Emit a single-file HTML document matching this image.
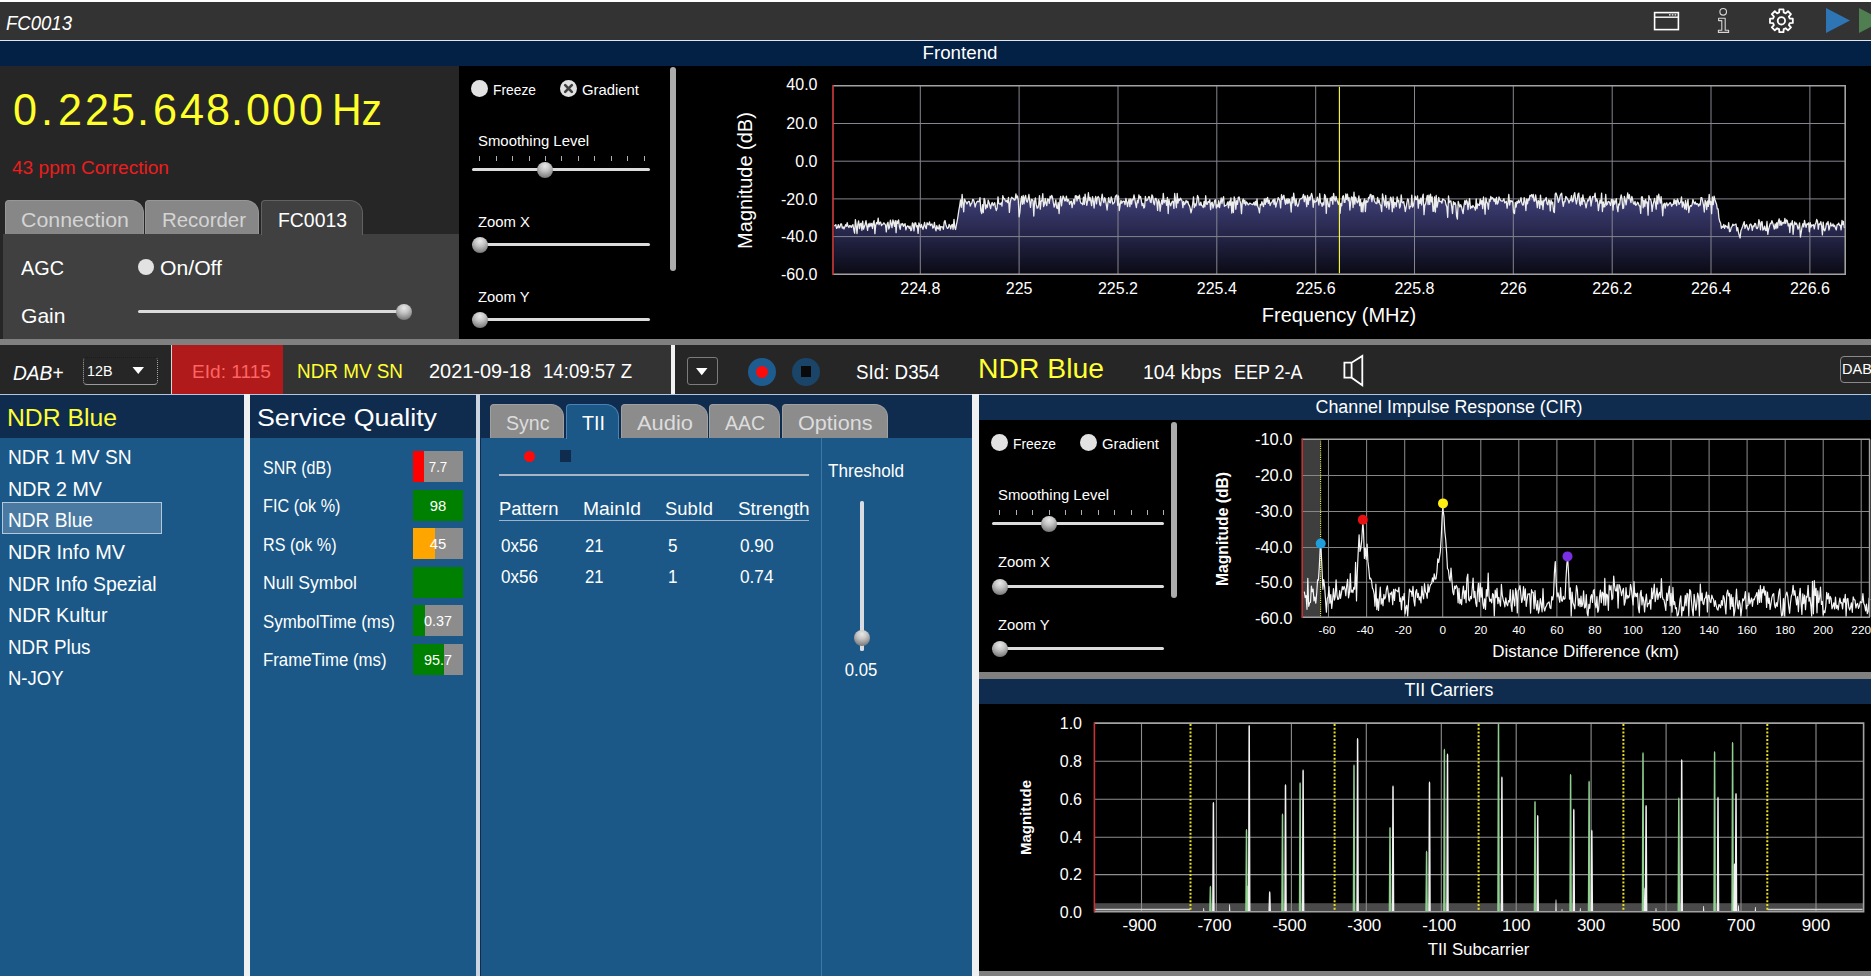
<!DOCTYPE html>
<html lang="en"><head><meta charset="utf-8"><title>FC0013 - DAB+ Receiver</title>
<style>
html,body{margin:0;padding:0;background:#000;}
body{width:1871px;height:976px;position:relative;overflow:hidden;font-family:"Liberation Sans", sans-serif;}
#app div,#app span.t,#app svg{position:absolute;}
#app{position:absolute;left:0;top:0;width:1871px;height:976px;overflow:hidden;}
span.t{white-space:pre;line-height:1;display:block;}
.thumb{border-radius:50%;background:radial-gradient(circle at 50% 25%,#e8e8e8 0%,#c4c4c4 35%,#8c8c8c 70%,#5a5a5a 100%);}
.radio{border-radius:50%;background:#e2e2e2;}
</style></head>
<body><div id="app">
<div style="left:0px;top:0px;width:1871px;height:2px;background:#ffffff;"></div>
<div style="left:0px;top:2px;width:1871px;height:38px;background:#333333;"></div>
<div style="left:0px;top:40px;width:1871px;height:1px;background:#dfe6ee;"></div>
<div style="left:0px;top:41px;width:1871px;height:25px;background:#032045;"></div>
<span class="t" id="t0" style="left:6.0px;top:13.1px;font-size:20px;color:#fff;transform:scaleX(0.9275);transform-origin:left center;font-style:italic;">FC0013</span>
<span class="t" id="t1" style="left:960.0px;top:43.9px;font-size:18px;color:#fff;transform:translateX(-50%) scaleX(1.0410);transform-origin:center center;">Frontend</span>
<svg style="left:1650px;top:6px" width="221" height="32" viewBox="1650 6 221 32" fill="none">
<rect x="1654.6" y="12.6" width="23.8" height="17" stroke="#fff" stroke-width="1.6"/>
<line x1="1654" y1="17.2" x2="1679" y2="17.2" stroke="#fff" stroke-width="1.4"/>
<line x1="1669" y1="14.9" x2="1676.5" y2="14.9" stroke="#fff" stroke-width="1.3" stroke-dasharray="1.6 1.2"/>
<circle cx="1723.2" cy="11.8" r="3.3" stroke="#d6d6d6" stroke-width="1.15"/>
<path d="M1718.6 18.2 H1725.2 V30.2 H1728.6 V32.4 H1718.4 V30.2 H1721.8 V20.6 H1718.6 Z" stroke="#d6d6d6" stroke-width="1.1" stroke-linejoin="round"/>
<path stroke="#fff" stroke-width="1.8" stroke-linejoin="round" d="M1789.69 18.51 L1792.81 18.72 L1792.81 22.88 L1789.69 23.09 L1788.88 25.04 L1790.94 27.40 L1788.00 30.34 L1785.64 28.28 L1783.69 29.09 L1783.48 32.21 L1779.32 32.21 L1779.11 29.09 L1777.16 28.28 L1774.80 30.34 L1771.86 27.40 L1773.92 25.04 L1773.11 23.09 L1769.99 22.88 L1769.99 18.72 L1773.11 18.51 L1773.92 16.56 L1771.86 14.20 L1774.80 11.26 L1777.16 13.32 L1779.11 12.51 L1779.32 9.39 L1783.48 9.39 L1783.69 12.51 L1785.64 13.32 L1788.00 11.26 L1790.94 14.20 L1788.88 16.56 Z"/>
<circle cx="1781.4" cy="20.8" r="3.7" stroke="#fff" stroke-width="1.8"/>
<path d="M1826 8 L1850 20.5 L1826 33 Z" fill="#2e75b6"/>
<path d="M1859 8 L1883 20.5 L1859 33 Z" fill="#4f7f50"/>
</svg>
<div style="left:0px;top:66px;width:459px;height:273px;background:#262626;"></div>
<span class="t" id="t2" style="left:24.6px;top:86.9px;font-size:45px;color:#ffff2a;transform:translateX(-50%) ;transform:translateX(-50%) scaleX(0.96);">0</span>
<span class="t" id="t3" style="left:47.0px;top:86.9px;font-size:45px;color:#ffff2a;transform:translateX(-50%) ;transform:translateX(-50%) scaleX(0.96);">.</span>
<span class="t" id="t4" style="left:70.0px;top:86.9px;font-size:45px;color:#ffff2a;transform:translateX(-50%) ;transform:translateX(-50%) scaleX(0.96);">2</span>
<span class="t" id="t5" style="left:97.2px;top:86.9px;font-size:45px;color:#ffff2a;transform:translateX(-50%) ;transform:translateX(-50%) scaleX(0.96);">2</span>
<span class="t" id="t6" style="left:123.4px;top:86.9px;font-size:45px;color:#ffff2a;transform:translateX(-50%) ;transform:translateX(-50%) scaleX(0.96);">5</span>
<span class="t" id="t7" style="left:142.5px;top:86.9px;font-size:45px;color:#ffff2a;transform:translateX(-50%) ;transform:translateX(-50%) scaleX(0.96);">.</span>
<span class="t" id="t8" style="left:165.0px;top:86.9px;font-size:45px;color:#ffff2a;transform:translateX(-50%) ;transform:translateX(-50%) scaleX(0.96);">6</span>
<span class="t" id="t9" style="left:191.5px;top:86.9px;font-size:45px;color:#ffff2a;transform:translateX(-50%) ;transform:translateX(-50%) scaleX(0.96);">4</span>
<span class="t" id="t10" style="left:218.0px;top:86.9px;font-size:45px;color:#ffff2a;transform:translateX(-50%) ;transform:translateX(-50%) scaleX(0.96);">8</span>
<span class="t" id="t11" style="left:237.0px;top:86.9px;font-size:45px;color:#ffff2a;transform:translateX(-50%) ;transform:translateX(-50%) scaleX(0.96);">.</span>
<span class="t" id="t12" style="left:257.5px;top:86.9px;font-size:45px;color:#ffff2a;transform:translateX(-50%) ;transform:translateX(-50%) scaleX(0.96);">0</span>
<span class="t" id="t13" style="left:284.0px;top:86.9px;font-size:45px;color:#ffff2a;transform:translateX(-50%) ;transform:translateX(-50%) scaleX(0.96);">0</span>
<span class="t" id="t14" style="left:311.0px;top:86.9px;font-size:45px;color:#ffff2a;transform:translateX(-50%) ;transform:translateX(-50%) scaleX(0.96);">0</span>
<span class="t" id="t15" style="left:331.5px;top:86.9px;font-size:45px;color:#ffff2a;transform:scaleX(0.9091);transform-origin:left center;">Hz</span>
<span class="t" id="t16" style="left:12.0px;top:159.5px;font-size:17.5px;color:#ee1c1c;transform:scaleX(1.0905);transform-origin:left center;">43 ppm Correction</span>
<div style="left:3px;top:234px;width:456px;height:105px;background:#404040;"></div>
<div style="left:5px;top:200px;width:139px;height:34px;background:#878787;border-radius:4px 13px 0 0;box-sizing:border-box;border:1px solid #979797;border-bottom:none;"></div>
<div style="left:145.2px;top:200px;width:113.80000000000001px;height:34px;background:#878787;border-radius:4px 13px 0 0;box-sizing:border-box;border:1px solid #979797;border-bottom:none;"></div>
<div style="left:261.3px;top:200px;width:101.69999999999999px;height:35px;background:#404040;border-radius:4px 13px 0 0;box-sizing:border-box;border:1px solid #626262;border-bottom:none;"></div>
<span class="t" id="t17" style="left:21.0px;top:209.2px;font-size:21px;color:#d4d4d4;transform:scaleX(1.0165);transform-origin:left center;">Connection</span>
<span class="t" id="t18" style="left:162.0px;top:209.2px;font-size:21px;color:#d4d4d4;transform:scaleX(0.9725);transform-origin:left center;">Recorder</span>
<span class="t" id="t19" style="left:277.5px;top:209.2px;font-size:21px;color:#fff;transform:scaleX(0.9235);transform-origin:left center;">FC0013</span>
<span class="t" id="t20" style="left:20.5px;top:257.2px;font-size:21px;color:#fff;transform:scaleX(0.9447);transform-origin:left center;">AGC</span>
<div class="radio" style="left:137.7px;top:258.7px;width:16px;height:16px;"></div>
<span class="t" id="t21" style="left:159.5px;top:258.3px;font-size:20.5px;color:#fff;transform:scaleX(1.0331);transform-origin:left center;">On/Off</span>
<span class="t" id="t22" style="left:20.5px;top:304.7px;font-size:21px;color:#fff;transform:scaleX(1.0032);transform-origin:left center;">Gain</span>
<div style="left:138px;top:309.5px;width:260px;height:3px;background:#dcdcdc;border-radius:2px;"></div>
<div class="thumb" style="left:395.7px;top:303.8px;width:16px;height:16px;"></div>
<div style="left:459px;top:66px;width:1412px;height:273px;background:#000;"></div>
<div class="radio" style="left:471.1px;top:80.2px;width:17.0px;height:17.0px;"></div>
<span class="t" id="t23" style="left:492.5px;top:81.7px;font-size:15px;color:#fff;transform:scaleX(0.9210);transform-origin:left center;">Freeze</span>
<div class="radio" style="left:559.8px;top:80.2px;width:17.0px;height:17.0px;"></div>
<svg style="left:559.8px;top:80.2px" width="17.0" height="17.0" viewBox="-8.5 -8.5 17 17"><path d="M-3.3 -3.3 L3.3 3.3 M3.3 -3.3 L-3.3 3.3" stroke="#404040" stroke-width="2.6" stroke-linecap="round"/></svg>
<span class="t" id="t24" style="left:581.5px;top:81.7px;font-size:15px;color:#fff;transform:scaleX(0.9905);transform-origin:left center;">Gradient</span>
<span class="t" id="t25" style="left:477.5px;top:132.7px;font-size:15px;color:#fff;transform:scaleX(0.9933);transform-origin:left center;">Smoothing Level</span>
<div style="left:472px;top:168.0px;width:178px;height:3px;background:#dcdcdc;border-radius:2px;"></div>
<div style="left:479.1px;top:156px;width:1px;height:5px;background:#b0b0b0;"></div>
<div style="left:495.6px;top:156px;width:1px;height:5px;background:#b0b0b0;"></div>
<div style="left:512.0px;top:156px;width:1px;height:5px;background:#b0b0b0;"></div>
<div style="left:528.5px;top:156px;width:1px;height:5px;background:#b0b0b0;"></div>
<div style="left:544.9px;top:156px;width:1px;height:5px;background:#b0b0b0;"></div>
<div style="left:561.4px;top:156px;width:1px;height:5px;background:#b0b0b0;"></div>
<div style="left:577.9px;top:156px;width:1px;height:5px;background:#b0b0b0;"></div>
<div style="left:594.3px;top:156px;width:1px;height:5px;background:#b0b0b0;"></div>
<div style="left:610.8px;top:156px;width:1px;height:5px;background:#b0b0b0;"></div>
<div style="left:627.2px;top:156px;width:1px;height:5px;background:#b0b0b0;"></div>
<div style="left:643.7px;top:156px;width:1px;height:5px;background:#b0b0b0;"></div>
<div class="thumb" style="left:537.4px;top:162.3px;width:16px;height:16px;"></div>
<span class="t" id="t26" style="left:477.5px;top:213.6px;font-size:15px;color:#fff;transform:scaleX(0.9902);transform-origin:left center;">Zoom X</span>
<div style="left:472px;top:242.9px;width:178px;height:3px;background:#dcdcdc;border-radius:2px;"></div>
<div class="thumb" style="left:471.6px;top:237.20000000000002px;width:16px;height:16px;"></div>
<span class="t" id="t27" style="left:477.5px;top:288.5px;font-size:15px;color:#fff;transform:scaleX(0.9856);transform-origin:left center;">Zoom Y</span>
<div style="left:472px;top:317.7px;width:178px;height:3px;background:#dcdcdc;border-radius:2px;"></div>
<div class="thumb" style="left:471.6px;top:312.0px;width:16px;height:16px;"></div>
<div style="left:670px;top:67px;width:6px;height:204px;background:#ababab;border-radius:3px;"></div>
<div style="left:0px;top:339px;width:1871px;height:6px;background:#808080;"></div>
<div style="left:0px;top:345px;width:671px;height:49px;background:#333333;"></div>
<div style="left:0px;top:345px;width:171px;height:49px;background:#262626;"></div>
<div style="left:171px;top:345px;width:112px;height:49px;background:#b01a1a;"></div>
<div style="left:671px;top:345px;width:4px;height:49px;background:#f2f2f2;"></div>
<div style="left:675px;top:345px;width:1196px;height:49px;background:#262626;"></div>
<div style="left:0px;top:393.5px;width:1871px;height:1.5px;background:#b4c6de;"></div>
<span class="t" id="t28" style="left:13.0px;top:363.3px;font-size:20px;color:#fff;transform:scaleX(0.9562);transform-origin:left center;font-style:italic;">DAB+</span>
<div style="left:83px;top:357.3px;width:75px;height:27.6px;box-sizing:border-box;border:1px dotted #a8a8a8;border-top-color:#1c1c1c;border-bottom:1px solid #9a9a9a;border-radius:4px;"></div>
<div style="left:171.2px;top:345px;width:1px;height:49px;background:#d6d6d6;"></div>
<span class="t" id="t29" style="left:86.7px;top:363.0px;font-size:15px;color:#fff;transform:scaleX(0.9549);transform-origin:left center;">12B</span>
<svg style="left:131px;top:365px" width="16" height="12"><path d="M1.5 2 L13 2 L7.25 9 Z" fill="#fff"/></svg>
<span class="t" id="t30" style="left:191.5px;top:362.3px;font-size:19px;color:#ff6464;transform:scaleX(1.0060);transform-origin:left center;">EId: 1115</span>
<span class="t" id="t31" style="left:297.0px;top:362.1px;font-size:19.5px;color:#ffff33;transform:scaleX(0.9687);transform-origin:left center;">NDR MV SN</span>
<span class="t" id="t32" style="left:429.4px;top:361.7px;font-size:19.5px;color:#fff;transform:scaleX(1.0226);transform-origin:left center;">2021-09-18</span>
<span class="t" id="t33" style="left:543.3px;top:361.7px;font-size:19.5px;color:#fff;transform:scaleX(0.9546);transform-origin:left center;">14:09:57 Z</span>
<div style="left:687px;top:357px;width:31px;height:28px;box-sizing:border-box;border:1px solid #7c7c7c;border-radius:3px;"></div>
<svg style="left:694px;top:366px" width="16" height="12"><path d="M2 2 L13.5 2 L7.75 9.3 Z" fill="#fff"/></svg>
<div style="left:747.5px;top:357.5px;width:28.6px;height:28.6px;border-radius:50%;background:#1e5c90;"></div>
<div style="left:755.6px;top:365.6px;width:12.4px;height:12.4px;border-radius:50%;background:#ff0a0a;"></div>
<div style="left:791.5px;top:357.5px;width:28.6px;height:28.6px;border-radius:50%;background:#1a4468;"></div>
<div style="left:801px;top:366.3px;width:9.8px;height:11px;background:#0a0a0a;"></div>
<span class="t" id="t34" style="left:855.9px;top:362.3px;font-size:20px;color:#fff;transform:scaleX(0.9387);transform-origin:left center;">SId: D354</span>
<span class="t" id="t35" style="left:978.0px;top:353.7px;font-size:28.5px;color:#ffff33;transform:scaleX(0.9943);transform-origin:left center;">NDR Blue</span>
<span class="t" id="t36" style="left:1143.0px;top:362.3px;font-size:20px;color:#fff;transform:scaleX(0.9671);transform-origin:left center;">104 kbps</span>
<span class="t" id="t37" style="left:1234.3px;top:362.3px;font-size:20px;color:#fff;transform:scaleX(0.8973);transform-origin:left center;">EEP 2-A</span>
<svg style="left:1340px;top:350px" width="30" height="40" viewBox="1340 350 30 40" fill="none">
<path d="M1344.4 362.7 H1351.6 L1362.3 355.9 V385.2 L1351.6 377.7 H1344.4 Z M1351.6 362.7 V377.7" stroke="#fff" stroke-width="1.8" stroke-linejoin="miter"/></svg>
<div style="left:1839.5px;top:355.5px;width:60px;height:27.5px;box-sizing:border-box;border:1px solid #8a8a8a;border-radius:4px;"></div>
<span class="t" id="t38" style="left:1842.2px;top:361.0px;font-size:15px;color:#fff;transform:scaleX(0.9726);transform-origin:left center;">DAB</span>
<div style="left:0px;top:395px;width:1871px;height:581px;background:#1b5887;"></div>
<div style="left:0px;top:395px;width:972px;height:43px;background:#0f2c4e;"></div>
<div style="left:243.7px;top:394px;width:6.4px;height:582px;background:#eef0f2;"></div>
<div style="left:476.3px;top:394px;width:3.5px;height:582px;background:#ccd4e2;"></div>
<div style="left:479.8px;top:395px;width:1.4px;height:581px;background:#0f2c4e;"></div>
<div style="left:972px;top:394px;width:6.6px;height:582px;background:#eef0f2;"></div>
<span class="t" id="t39" style="left:7.0px;top:406.5px;font-size:23px;color:#ffff33;transform:scaleX(1.0756);transform-origin:left center;">NDR Blue</span>
<div style="left:1.5px;top:502px;width:160.5px;height:31.5px;box-sizing:border-box;background:#4a7aa2;border:1px solid #b4c8dc;"></div>
<span class="t" id="t40" style="left:8.0px;top:448.1px;font-size:19.5px;color:#fff;transform:scaleX(0.9826);transform-origin:left center;">NDR 1 MV SN</span>
<span class="t" id="t41" style="left:8.0px;top:479.7px;font-size:19.5px;color:#fff;transform:scaleX(1.0087);transform-origin:left center;">NDR 2 MV</span>
<span class="t" id="t42" style="left:8.0px;top:511.3px;font-size:19.5px;color:#fff;transform:scaleX(0.9804);transform-origin:left center;">NDR Blue</span>
<span class="t" id="t43" style="left:8.0px;top:542.9px;font-size:19.5px;color:#fff;transform:scaleX(1.0186);transform-origin:left center;">NDR Info MV</span>
<span class="t" id="t44" style="left:8.0px;top:574.5px;font-size:19.5px;color:#fff;transform:scaleX(0.9928);transform-origin:left center;">NDR Info Spezial</span>
<span class="t" id="t45" style="left:8.0px;top:606.1px;font-size:19.5px;color:#fff;transform:scaleX(1.0090);transform-origin:left center;">NDR Kultur</span>
<span class="t" id="t46" style="left:8.0px;top:637.7px;font-size:19.5px;color:#fff;transform:scaleX(0.9637);transform-origin:left center;">NDR Plus</span>
<span class="t" id="t47" style="left:8.0px;top:669.3px;font-size:19.5px;color:#fff;transform:scaleX(0.9487);transform-origin:left center;">N-JOY</span>
<span class="t" id="t48" style="left:257.0px;top:406.6px;font-size:23px;color:#fff;transform:scaleX(1.1638);transform-origin:left center;">Service Quality</span>
<span class="t" id="t49" style="left:263.0px;top:459.7px;font-size:17.5px;color:#fff;transform:scaleX(0.9149);transform-origin:left center;">SNR (dB)</span>
<div style="left:412.5px;top:451.3px;width:50.2px;height:31px;background:#8c8c8c;"></div>
<div style="left:412.5px;top:451.3px;width:11.5px;height:31px;background:#ff0000;"></div>
<span class="t" id="t50" style="left:437.6px;top:460.4px;font-size:14px;color:#fff;transform:translateX(-50%) scaleX(0.9502);transform-origin:center center;">7.7</span>
<span class="t" id="t51" style="left:263.0px;top:498.2px;font-size:17.5px;color:#fff;transform:scaleX(0.9268);transform-origin:left center;">FIC (ok %)</span>
<div style="left:412.5px;top:489.8px;width:50.2px;height:31px;background:#8c8c8c;"></div>
<div style="left:412.5px;top:489.8px;width:50.2px;height:31px;background:#008000;"></div>
<span class="t" id="t52" style="left:437.6px;top:498.9px;font-size:14px;color:#fff;transform:translateX(-50%) scaleX(1.0592);transform-origin:center center;">98</span>
<span class="t" id="t53" style="left:263.0px;top:536.8px;font-size:17.5px;color:#fff;transform:scaleX(0.9218);transform-origin:left center;">RS (ok %)</span>
<div style="left:412.5px;top:528.3px;width:50.2px;height:31px;background:#8c8c8c;"></div>
<div style="left:412.5px;top:528.3px;width:22.5px;height:31px;background:#ffa500;"></div>
<span class="t" id="t54" style="left:437.6px;top:537.4px;font-size:14px;color:#fff;transform:translateX(-50%) scaleX(1.0592);transform-origin:center center;">45</span>
<span class="t" id="t55" style="left:263.0px;top:575.3px;font-size:17.5px;color:#fff;transform:scaleX(1.0067);transform-origin:left center;">Null Symbol</span>
<div style="left:412.5px;top:566.8px;width:50.2px;height:31px;background:#8c8c8c;"></div>
<div style="left:412.5px;top:566.8px;width:50.2px;height:31px;background:#008000;"></div>
<span class="t" id="t56" style="left:263.0px;top:613.9px;font-size:17.5px;color:#fff;transform:scaleX(0.9675);transform-origin:left center;">SymbolTime (ms)</span>
<div style="left:412.5px;top:605.3px;width:50.2px;height:31px;background:#8c8c8c;"></div>
<div style="left:412.5px;top:605.3px;width:12.5px;height:31px;background:#008000;"></div>
<span class="t" id="t57" style="left:437.6px;top:614.4px;font-size:14px;color:#fff;transform:translateX(-50%) scaleX(1.0275);transform-origin:center center;">0.37</span>
<span class="t" id="t58" style="left:263.0px;top:652.4px;font-size:17.5px;color:#fff;transform:scaleX(0.9599);transform-origin:left center;">FrameTime (ms)</span>
<div style="left:412.5px;top:643.8px;width:50.2px;height:31px;background:#8c8c8c;"></div>
<div style="left:412.5px;top:643.8px;width:31.5px;height:31px;background:#008000;"></div>
<span class="t" id="t59" style="left:437.6px;top:652.9px;font-size:14px;color:#fff;transform:translateX(-50%) scaleX(1.0275);transform-origin:center center;">95.7</span>
<div style="left:490.3px;top:404.3px;width:73.99999999999994px;height:33.69999999999999px;background:#8c8c8c;border-radius:4px 13px 0 0;box-sizing:border-box;border:1px solid #a0a0a0;border-bottom:none;"></div>
<div style="left:620.5px;top:404.3px;width:87.29999999999995px;height:33.69999999999999px;background:#8c8c8c;border-radius:4px 13px 0 0;box-sizing:border-box;border:1px solid #a0a0a0;border-bottom:none;"></div>
<div style="left:709.4px;top:404.3px;width:70.80000000000007px;height:33.69999999999999px;background:#8c8c8c;border-radius:4px 13px 0 0;box-sizing:border-box;border:1px solid #a0a0a0;border-bottom:none;"></div>
<div style="left:781.5px;top:404.3px;width:106.39999999999998px;height:33.69999999999999px;background:#8c8c8c;border-radius:4px 13px 0 0;box-sizing:border-box;border:1px solid #a0a0a0;border-bottom:none;"></div>
<div style="left:565.5px;top:404.3px;width:53.5px;height:34.69999999999999px;background:#1b5887;border-radius:4px 13px 0 0;box-sizing:border-box;border:1px solid #4a84b4;border-bottom:none;"></div>
<span class="t" id="t60" style="left:506.0px;top:411.9px;font-size:21px;color:#dcdcdc;transform:scaleX(0.9317);transform-origin:left center;">Sync</span>
<span class="t" id="t61" style="left:581.5px;top:411.9px;font-size:21px;color:#fff;transform:scaleX(0.9388);transform-origin:left center;">TII</span>
<span class="t" id="t62" style="left:636.7px;top:411.9px;font-size:21px;color:#dcdcdc;transform:scaleX(1.0425);transform-origin:left center;">Audio</span>
<span class="t" id="t63" style="left:725.0px;top:411.9px;font-size:21px;color:#dcdcdc;transform:scaleX(0.9262);transform-origin:left center;">AAC</span>
<span class="t" id="t64" style="left:797.5px;top:411.9px;font-size:21px;color:#dcdcdc;transform:scaleX(1.0294);transform-origin:left center;">Options</span>
<div style="left:821px;top:438px;width:1px;height:538px;background:#3f78a6;"></div>
<div style="left:523.8px;top:450.5px;width:11px;height:11px;border-radius:50%;background:#ff0a0a;"></div>
<div style="left:560px;top:450.3px;width:10.6px;height:11.4px;background:#0f2c4e;"></div>
<div style="left:499px;top:474.2px;width:310px;height:1.6px;background:#aab5c4;"></div>
<div style="left:499px;top:519.7px;width:310px;height:1px;background:#9db2cc;"></div>
<span class="t" id="t65" style="left:499.0px;top:499.6px;font-size:18px;color:#fff;transform:scaleX(1.0250);transform-origin:left center;">Pattern</span>
<span class="t" id="t66" style="left:583.0px;top:499.6px;font-size:18px;color:#fff;transform:scaleX(1.0735);transform-origin:left center;">MainId</span>
<span class="t" id="t67" style="left:665.3px;top:499.6px;font-size:18px;color:#fff;transform:scaleX(1.0203);transform-origin:left center;">SubId</span>
<span class="t" id="t68" style="left:738.0px;top:499.6px;font-size:18px;color:#fff;transform:scaleX(1.0507);transform-origin:left center;">Strength</span>
<span class="t" id="t69" style="left:501.0px;top:537.9px;font-size:17.5px;color:#fff;transform:scaleX(0.9749);transform-origin:left center;">0x56</span>
<span class="t" id="t70" style="left:585.0px;top:537.9px;font-size:17.5px;color:#fff;transform:scaleX(0.9502);transform-origin:left center;">21</span>
<span class="t" id="t71" style="left:668.0px;top:537.9px;font-size:17.5px;color:#fff;transform:scaleX(0.9759);transform-origin:left center;">5</span>
<span class="t" id="t72" style="left:740.0px;top:537.9px;font-size:17.5px;color:#fff;transform:scaleX(0.9835);transform-origin:left center;">0.90</span>
<span class="t" id="t73" style="left:501.0px;top:568.7px;font-size:17.5px;color:#fff;transform:scaleX(0.9749);transform-origin:left center;">0x56</span>
<span class="t" id="t74" style="left:585.0px;top:568.7px;font-size:17.5px;color:#fff;transform:scaleX(0.9502);transform-origin:left center;">21</span>
<span class="t" id="t75" style="left:668.0px;top:568.7px;font-size:17.5px;color:#fff;transform:scaleX(0.9759);transform-origin:left center;">1</span>
<span class="t" id="t76" style="left:740.0px;top:568.7px;font-size:17.5px;color:#fff;transform:scaleX(0.9835);transform-origin:left center;">0.74</span>
<span class="t" id="t77" style="left:827.7px;top:461.7px;font-size:18px;color:#fff;transform:scaleX(0.9494);transform-origin:left center;">Threshold</span>
<div style="left:860.4px;top:501px;width:3.3px;height:150px;background:#d8dce2;border-radius:1.6px;"></div>
<div class="thumb" style="left:854px;top:629.7px;width:16px;height:16px;"></div>
<span class="t" id="t78" style="left:861.0px;top:661.5px;font-size:17.5px;color:#fff;transform:translateX(-50%) scaleX(0.9541);transform-origin:center center;">0.05</span>
<div style="left:978.6px;top:395px;width:892.4px;height:25px;background:#0f2c4e;"></div>
<div style="left:978.6px;top:420px;width:892.4px;height:252px;background:#000;"></div>
<div style="left:978.6px;top:672px;width:892.4px;height:7px;background:#808080;"></div>
<div style="left:978.6px;top:679px;width:892.4px;height:25px;background:#0f2c4e;"></div>
<div style="left:978.6px;top:704px;width:892.4px;height:267px;background:#000;"></div>
<div style="left:978.6px;top:971px;width:892.4px;height:5px;background:#808080;"></div>
<span class="t" id="t79" style="left:1449.3px;top:397.8px;font-size:18px;color:#fff;transform:translateX(-50%) scaleX(0.9921);transform-origin:center center;">Channel Impulse Response (CIR)</span>
<span class="t" id="t80" style="left:1449.4px;top:681.0px;font-size:18px;color:#fff;transform:translateX(-50%) scaleX(0.9889);transform-origin:center center;">TII Carriers</span>
<div class="radio" style="left:990.7px;top:433.9px;width:17.0px;height:17.0px;"></div>
<span class="t" id="t81" style="left:1012.6px;top:435.8px;font-size:15px;color:#fff;transform:scaleX(0.9210);transform-origin:left center;">Freeze</span>
<div class="radio" style="left:1079.8px;top:433.9px;width:17.0px;height:17.0px;"></div>
<span class="t" id="t82" style="left:1101.8px;top:435.8px;font-size:15px;color:#fff;transform:scaleX(0.9905);transform-origin:left center;">Gradient</span>
<span class="t" id="t83" style="left:997.5px;top:487.2px;font-size:15px;color:#fff;transform:scaleX(0.9933);transform-origin:left center;">Smoothing Level</span>
<div style="left:991.6px;top:522.0px;width:172.39999999999998px;height:3px;background:#dcdcdc;border-radius:2px;"></div>
<div style="left:999.3px;top:510px;width:1px;height:5.2999999999999545px;background:#b0b0b0;"></div>
<div style="left:1015.7px;top:510px;width:1px;height:5.2999999999999545px;background:#b0b0b0;"></div>
<div style="left:1032.1px;top:510px;width:1px;height:5.2999999999999545px;background:#b0b0b0;"></div>
<div style="left:1048.5px;top:510px;width:1px;height:5.2999999999999545px;background:#b0b0b0;"></div>
<div style="left:1064.9px;top:510px;width:1px;height:5.2999999999999545px;background:#b0b0b0;"></div>
<div style="left:1081.3px;top:510px;width:1px;height:5.2999999999999545px;background:#b0b0b0;"></div>
<div style="left:1097.8px;top:510px;width:1px;height:5.2999999999999545px;background:#b0b0b0;"></div>
<div style="left:1114.2px;top:510px;width:1px;height:5.2999999999999545px;background:#b0b0b0;"></div>
<div style="left:1130.6px;top:510px;width:1px;height:5.2999999999999545px;background:#b0b0b0;"></div>
<div style="left:1147.0px;top:510px;width:1px;height:5.2999999999999545px;background:#b0b0b0;"></div>
<div style="left:1163.4px;top:510px;width:1px;height:5.2999999999999545px;background:#b0b0b0;"></div>
<div class="thumb" style="left:1041px;top:516.3px;width:16px;height:16px;"></div>
<span class="t" id="t84" style="left:997.5px;top:554.0px;font-size:15px;color:#fff;transform:scaleX(0.9902);transform-origin:left center;">Zoom X</span>
<div style="left:991.6px;top:584.5px;width:172.39999999999998px;height:3px;background:#dcdcdc;border-radius:2px;"></div>
<div class="thumb" style="left:991.8px;top:578.8px;width:16px;height:16px;"></div>
<span class="t" id="t85" style="left:997.5px;top:617.1px;font-size:15px;color:#fff;transform:scaleX(0.9856);transform-origin:left center;">Zoom Y</span>
<div style="left:991.6px;top:646.8px;width:172.39999999999998px;height:3px;background:#dcdcdc;border-radius:2px;"></div>
<div class="thumb" style="left:991.8px;top:641.0999999999999px;width:16px;height:16px;"></div>
<div style="left:1171.4px;top:421.5px;width:6px;height:176px;background:#ababab;border-radius:3px;"></div>
<svg style="left:700px;top:66px" width="1171" height="273" viewBox="700 66 1171 273" >
<defs><linearGradient id="sg" gradientUnits="userSpaceOnUse" x1="0" y1="190" x2="0" y2="274"><stop offset="0" stop-color="#44447f"/><stop offset="0.45" stop-color="#2a2a52"/><stop offset="1" stop-color="#0a0a15"/></linearGradient></defs>
<polygon points="834.0,274.3 834.2,226.1 835.0,225.5 835.8,224.6 836.6,228.4 837.5,227.5 838.3,224.6 839.1,227.9 839.9,227.0 840.7,223.8 841.5,223.8 842.3,228.1 843.2,227.0 844.0,229.0 844.8,227.1 845.6,224.7 846.4,226.3 847.2,222.6 848.0,226.2 848.9,227.5 849.7,225.6 850.5,225.9 851.3,227.4 852.1,225.6 852.9,224.6 853.8,229.5 854.6,233.1 855.4,219.6 856.2,225.5 857.0,233.5 857.8,224.5 858.6,220.8 859.5,228.6 860.3,223.9 861.1,223.2 861.9,230.3 862.7,221.1 863.5,229.2 864.3,227.0 865.2,224.2 866.0,220.7 866.8,226.1 867.6,230.4 868.4,223.8 869.2,226.8 870.0,223.1 870.9,226.2 871.7,223.3 872.5,228.5 873.3,222.9 874.1,220.6 874.9,233.7 875.7,225.3 876.6,222.5 877.4,223.8 878.2,218.2 879.0,224.7 879.8,222.7 880.6,222.1 881.5,225.7 882.3,224.3 883.1,224.2 883.9,222.8 884.7,224.0 885.5,224.9 886.3,231.9 887.2,223.9 888.0,222.3 888.8,229.0 889.6,227.0 890.4,220.2 891.2,223.6 892.0,227.6 892.9,219.9 893.7,222.5 894.5,226.3 895.3,220.6 896.1,232.6 896.9,221.0 897.7,223.3 898.6,219.9 899.4,226.5 900.2,229.3 901.0,223.8 901.8,224.7 902.6,223.5 903.4,226.4 904.3,224.6 905.1,223.8 905.9,229.9 906.7,227.1 907.5,226.0 908.3,226.2 909.2,228.3 910.0,226.2 910.8,230.7 911.6,229.8 912.4,223.0 913.2,224.0 914.0,230.8 914.9,222.9 915.7,222.8 916.5,226.9 917.3,225.6 918.1,233.4 918.9,223.0 919.7,225.3 920.6,227.4 921.4,224.5 922.2,227.4 923.0,229.3 923.8,225.8 924.6,222.5 925.4,226.9 926.3,228.6 927.1,222.7 927.9,224.5 928.7,224.6 929.5,221.9 930.3,225.7 931.1,224.6 932.0,224.0 932.8,228.1 933.6,227.4 934.4,222.5 935.2,228.0 936.0,230.8 936.8,225.6 937.7,228.7 938.5,229.0 939.3,224.8 940.1,230.3 940.9,226.5 941.7,226.8 942.6,226.8 943.4,229.3 944.2,222.1 945.0,220.5 945.8,224.4 946.6,226.8 947.4,228.4 948.3,227.8 949.1,224.5 949.9,225.6 950.7,228.9 951.5,225.3 952.3,224.5 953.1,229.3 954.0,219.4 954.8,227.4 955.6,229.5 956.4,224.8 957.2,221.0 958.0,216.2 958.8,210.7 959.7,205.5 960.5,200.0 961.3,207.3 962.1,194.4 962.9,203.4 963.7,211.8 964.5,199.1 965.4,200.9 966.2,202.4 967.0,204.0 967.8,202.2 968.6,201.3 969.4,201.7 970.3,206.0 971.1,203.8 971.9,202.8 972.7,199.3 973.5,199.8 974.3,202.2 975.1,207.0 976.0,203.7 976.8,202.0 977.6,201.1 978.4,201.6 979.2,201.5 980.0,197.6 980.8,210.5 981.7,213.6 982.5,204.7 983.3,212.5 984.1,198.4 984.9,200.0 985.7,208.9 986.5,204.8 987.4,207.3 988.2,200.1 989.0,202.5 989.8,205.4 990.6,208.6 991.4,204.2 992.2,202.5 993.1,205.6 993.9,204.0 994.7,202.7 995.5,207.7 996.3,210.6 997.1,208.0 998.0,196.8 998.8,203.6 999.6,203.8 1000.4,204.4 1001.2,202.8 1002.0,206.0 1002.8,195.7 1003.7,198.8 1004.5,198.7 1005.3,200.6 1006.1,201.7 1006.9,200.4 1007.7,202.7 1008.5,197.3 1009.4,212.4 1010.2,202.8 1011.0,198.8 1011.8,197.3 1012.6,198.4 1013.4,198.4 1014.2,200.0 1015.1,199.8 1015.9,193.9 1016.7,197.9 1017.5,196.0 1018.3,200.2 1019.1,216.8 1019.9,212.2 1020.8,201.5 1021.6,196.5 1022.4,204.3 1023.2,195.5 1024.0,203.8 1024.8,197.4 1025.6,195.4 1026.5,201.0 1027.3,202.1 1028.1,199.0 1028.9,194.5 1029.7,201.1 1030.5,207.4 1031.4,199.5 1032.2,199.6 1033.0,200.9 1033.8,216.0 1034.6,201.4 1035.4,197.9 1036.2,204.4 1037.1,208.0 1037.9,207.8 1038.7,204.4 1039.5,195.6 1040.3,209.1 1041.1,201.0 1041.9,201.1 1042.8,193.6 1043.6,206.6 1044.4,204.6 1045.2,198.4 1046.0,203.4 1046.8,205.7 1047.6,199.0 1048.5,199.4 1049.3,203.3 1050.1,196.2 1050.9,198.2 1051.7,195.3 1052.5,197.3 1053.3,202.4 1054.2,207.2 1055.0,204.3 1055.8,199.9 1056.6,207.5 1057.4,208.6 1058.2,202.5 1059.1,213.5 1059.9,200.3 1060.7,196.5 1061.5,205.8 1062.3,200.0 1063.1,196.0 1063.9,197.5 1064.8,200.9 1065.6,200.4 1066.4,196.1 1067.2,201.5 1068.0,199.4 1068.8,200.3 1069.6,204.3 1070.5,201.7 1071.3,201.1 1072.1,207.7 1072.9,203.5 1073.7,199.5 1074.5,204.0 1075.3,195.9 1076.2,195.6 1077.0,201.0 1077.8,196.3 1078.6,198.4 1079.4,195.2 1080.2,201.1 1081.0,203.3 1081.9,203.4 1082.7,204.7 1083.5,197.1 1084.3,204.4 1085.1,194.1 1085.9,199.5 1086.8,205.4 1087.6,200.8 1088.4,192.7 1089.2,200.6 1090.0,197.3 1090.8,200.8 1091.6,205.6 1092.5,196.6 1093.3,200.7 1094.1,208.0 1094.9,200.3 1095.7,196.3 1096.5,203.8 1097.3,197.9 1098.2,196.5 1099.0,197.8 1099.8,204.6 1100.6,205.7 1101.4,199.4 1102.2,194.2 1103.0,200.2 1103.9,202.7 1104.7,197.6 1105.5,199.9 1106.3,204.3 1107.1,210.0 1107.9,202.9 1108.7,197.6 1109.6,202.7 1110.4,202.8 1111.2,196.9 1112.0,199.3 1112.8,204.0 1113.6,203.0 1114.4,202.7 1115.3,196.8 1116.1,195.6 1116.9,194.9 1117.7,205.3 1118.5,196.0 1119.3,210.5 1120.2,204.7 1121.0,200.3 1121.8,203.3 1122.6,201.8 1123.4,201.1 1124.2,201.3 1125.0,204.6 1125.9,198.4 1126.7,202.0 1127.5,206.6 1128.3,201.9 1129.1,198.9 1129.9,206.7 1130.7,198.8 1131.6,204.1 1132.4,199.2 1133.2,199.8 1134.0,194.8 1134.8,199.2 1135.6,203.9 1136.4,207.7 1137.3,200.4 1138.1,202.9 1138.9,194.8 1139.7,198.0 1140.5,196.5 1141.3,200.3 1142.1,205.6 1143.0,203.4 1143.8,208.0 1144.6,207.0 1145.4,196.3 1146.2,200.5 1147.0,200.3 1147.9,199.1 1148.7,196.6 1149.5,196.8 1150.3,202.0 1151.1,202.6 1151.9,194.8 1152.7,196.4 1153.6,202.7 1154.4,204.9 1155.2,198.7 1156.0,198.4 1156.8,201.6 1157.6,210.4 1158.4,199.6 1159.3,201.5 1160.1,211.1 1160.9,204.7 1161.7,200.2 1162.5,204.2 1163.3,193.4 1164.1,202.8 1165.0,200.4 1165.8,200.3 1166.6,205.3 1167.4,197.3 1168.2,213.5 1169.0,199.5 1169.8,203.6 1170.7,205.8 1171.5,203.3 1172.3,201.1 1173.1,201.3 1173.9,208.4 1174.7,193.5 1175.5,200.2 1176.4,207.6 1177.2,193.5 1178.0,203.2 1178.8,199.1 1179.6,200.5 1180.4,198.2 1181.3,199.7 1182.1,201.0 1182.9,207.7 1183.7,201.4 1184.5,204.7 1185.3,203.5 1186.1,200.4 1187.0,202.6 1187.8,201.2 1188.6,204.5 1189.4,205.5 1190.2,208.4 1191.0,212.9 1191.8,209.5 1192.7,203.8 1193.5,196.8 1194.3,207.7 1195.1,204.0 1195.9,205.9 1196.7,201.8 1197.5,195.5 1198.4,197.5 1199.2,204.9 1200.0,205.2 1200.8,202.1 1201.6,205.5 1202.4,205.8 1203.2,207.6 1204.1,201.3 1204.9,206.8 1205.7,195.7 1206.5,204.2 1207.3,204.3 1208.1,201.4 1209.0,202.2 1209.8,199.7 1210.6,209.7 1211.4,202.9 1212.2,202.2 1213.0,208.0 1213.8,205.0 1214.7,200.3 1215.5,199.8 1216.3,208.0 1217.1,204.8 1217.9,206.8 1218.7,200.6 1219.5,207.7 1220.4,202.5 1221.2,198.0 1222.0,203.5 1222.8,198.9 1223.6,196.7 1224.4,206.3 1225.2,205.8 1226.1,205.3 1226.9,204.3 1227.7,202.0 1228.5,207.9 1229.3,201.2 1230.1,205.1 1230.9,197.8 1231.8,213.0 1232.6,201.9 1233.4,212.5 1234.2,196.9 1235.0,199.6 1235.8,209.3 1236.7,200.7 1237.5,204.4 1238.3,197.4 1239.1,197.0 1239.9,200.7 1240.7,203.4 1241.5,213.7 1242.4,200.8 1243.2,198.9 1244.0,203.7 1244.8,200.2 1245.6,205.2 1246.4,201.8 1247.2,202.8 1248.1,204.8 1248.9,204.4 1249.7,203.2 1250.5,203.4 1251.3,204.0 1252.1,204.5 1252.9,204.5 1253.8,202.5 1254.6,205.0 1255.4,201.5 1256.2,205.5 1257.0,198.9 1257.8,206.6 1258.6,208.4 1259.5,212.9 1260.3,204.4 1261.1,205.1 1261.9,201.7 1262.7,204.5 1263.5,206.6 1264.3,198.8 1265.2,204.3 1266.0,198.5 1266.8,202.0 1267.6,197.4 1268.4,203.3 1269.2,200.1 1270.1,205.5 1270.9,203.0 1271.7,202.7 1272.5,200.9 1273.3,199.5 1274.1,204.5 1274.9,199.0 1275.8,207.1 1276.6,203.4 1277.4,200.9 1278.2,197.7 1279.0,198.9 1279.8,200.7 1280.6,207.9 1281.5,194.7 1282.3,199.3 1283.1,196.9 1283.9,195.3 1284.7,200.5 1285.5,204.4 1286.3,199.1 1287.2,203.6 1288.0,198.7 1288.8,203.2 1289.6,199.3 1290.4,203.1 1291.2,212.0 1292.0,197.2 1292.9,202.8 1293.7,193.1 1294.5,199.8 1295.3,205.5 1296.1,198.9 1296.9,204.5 1297.8,206.5 1298.6,204.5 1299.4,200.3 1300.2,198.9 1301.0,198.7 1301.8,198.3 1302.6,197.4 1303.5,194.3 1304.3,201.6 1305.1,195.8 1305.9,198.9 1306.7,206.6 1307.5,195.3 1308.3,204.4 1309.2,197.0 1310.0,200.2 1310.8,196.2 1311.6,193.4 1312.4,196.6 1313.2,207.3 1314.0,200.0 1314.9,202.3 1315.7,201.5 1316.5,201.3 1317.3,197.1 1318.1,200.2 1318.9,205.0 1319.7,193.6 1320.6,202.9 1321.4,203.2 1322.2,206.3 1323.0,202.7 1323.8,205.0 1324.6,194.5 1325.5,196.2 1326.3,213.4 1327.1,198.5 1327.9,201.8 1328.7,206.7 1329.5,206.9 1330.3,198.0 1331.2,200.6 1332.0,196.7 1332.8,204.1 1333.6,193.3 1334.4,198.6 1335.2,201.1 1336.0,196.4 1336.9,199.7 1337.7,202.2 1338.5,204.5 1339.3,199.5 1340.1,213.3 1340.9,203.4 1341.7,205.8 1342.6,196.7 1343.4,195.7 1344.2,202.3 1345.0,202.3 1345.8,193.9 1346.6,199.3 1347.4,194.1 1348.3,200.7 1349.1,197.7 1349.9,210.0 1350.7,202.1 1351.5,196.8 1352.3,197.4 1353.1,207.5 1354.0,192.2 1354.8,204.1 1355.6,197.1 1356.4,200.1 1357.2,202.8 1358.0,201.6 1358.9,195.8 1359.7,205.6 1360.5,199.4 1361.3,211.7 1362.1,202.6 1362.9,211.9 1363.7,201.8 1364.6,198.9 1365.4,211.5 1366.2,200.4 1367.0,202.2 1367.8,201.8 1368.6,197.4 1369.4,198.0 1370.3,194.5 1371.1,194.7 1371.9,201.7 1372.7,195.6 1373.5,195.9 1374.3,200.5 1375.1,202.3 1376.0,203.4 1376.8,203.7 1377.6,197.4 1378.4,202.6 1379.2,200.0 1380.0,204.4 1380.8,205.4 1381.7,211.5 1382.5,193.8 1383.3,198.0 1384.1,201.9 1384.9,205.8 1385.7,195.4 1386.6,207.5 1387.4,202.2 1388.2,201.3 1389.0,209.2 1389.8,202.5 1390.6,197.1 1391.4,198.7 1392.3,211.6 1393.1,196.9 1393.9,207.8 1394.7,202.5 1395.5,202.8 1396.3,206.5 1397.1,196.8 1398.0,201.8 1398.8,200.3 1399.6,208.0 1400.4,206.0 1401.2,194.9 1402.0,202.0 1402.8,202.9 1403.7,201.6 1404.5,205.8 1405.3,211.5 1406.1,207.6 1406.9,202.7 1407.7,198.9 1408.5,200.1 1409.4,208.8 1410.2,206.6 1411.0,206.1 1411.8,195.1 1412.6,207.1 1413.4,205.4 1414.3,200.5 1415.1,196.2 1415.9,199.6 1416.7,199.1 1417.5,195.9 1418.3,208.2 1419.1,199.7 1420.0,203.3 1420.8,198.2 1421.6,204.9 1422.4,197.4 1423.2,194.1 1424.0,214.7 1424.8,205.4 1425.7,203.6 1426.5,199.2 1427.3,195.4 1428.1,204.5 1428.9,195.1 1429.7,204.4 1430.5,194.2 1431.4,201.8 1432.2,196.9 1433.0,211.3 1433.8,211.2 1434.6,196.9 1435.4,212.0 1436.2,195.5 1437.1,207.2 1437.9,203.0 1438.7,197.5 1439.5,201.3 1440.3,201.7 1441.1,201.1 1441.9,203.2 1442.8,198.9 1443.6,199.6 1444.4,200.2 1445.2,200.5 1446.0,204.8 1446.8,206.8 1447.7,217.4 1448.5,196.0 1449.3,202.5 1450.1,201.1 1450.9,200.9 1451.7,206.5 1452.5,213.5 1453.4,201.7 1454.2,204.4 1455.0,202.6 1455.8,204.8 1456.6,216.0 1457.4,219.0 1458.2,201.5 1459.1,204.4 1459.9,207.0 1460.7,204.7 1461.5,206.7 1462.3,210.5 1463.1,213.6 1463.9,206.3 1464.8,200.7 1465.6,204.3 1466.4,200.1 1467.2,201.8 1468.0,209.5 1468.8,203.1 1469.6,198.6 1470.5,208.5 1471.3,206.3 1472.1,207.8 1472.9,205.5 1473.7,206.7 1474.5,207.4 1475.4,210.2 1476.2,198.9 1477.0,208.6 1477.8,203.9 1478.6,204.7 1479.4,205.4 1480.2,198.9 1481.1,204.1 1481.9,200.3 1482.7,208.7 1483.5,197.0 1484.3,203.8 1485.1,214.2 1485.9,197.9 1486.8,202.1 1487.6,203.5 1488.4,209.2 1489.2,199.7 1490.0,201.6 1490.8,196.5 1491.6,199.0 1492.5,197.7 1493.3,198.7 1494.1,201.4 1494.9,198.9 1495.7,204.0 1496.5,197.4 1497.3,204.1 1498.2,202.4 1499.0,197.0 1499.8,198.9 1500.6,200.6 1501.4,200.8 1502.2,201.3 1503.1,200.6 1503.9,198.7 1504.7,202.8 1505.5,202.5 1506.3,201.2 1507.1,208.2 1507.9,203.2 1508.8,194.4 1509.6,205.0 1510.4,200.7 1511.2,201.5 1512.0,200.7 1512.8,202.6 1513.6,212.8 1514.5,213.5 1515.3,202.5 1516.1,207.1 1516.9,201.5 1517.7,203.2 1518.5,200.1 1519.3,202.7 1520.2,201.0 1521.0,197.7 1521.8,202.8 1522.6,205.1 1523.4,204.9 1524.2,197.6 1525.0,200.8 1525.9,210.5 1526.7,198.9 1527.5,203.8 1528.3,199.0 1529.1,200.2 1529.9,195.5 1530.7,196.1 1531.6,194.6 1532.4,197.3 1533.2,194.4 1534.0,201.0 1534.8,201.0 1535.6,194.9 1536.5,200.8 1537.3,207.6 1538.1,200.6 1538.9,201.0 1539.7,208.4 1540.5,195.1 1541.3,204.8 1542.2,200.8 1543.0,209.5 1543.8,200.1 1544.6,200.9 1545.4,199.4 1546.2,197.5 1547.0,203.6 1547.9,204.8 1548.7,199.9 1549.5,200.8 1550.3,210.9 1551.1,199.8 1551.9,203.9 1552.7,202.1 1553.6,211.5 1554.4,212.5 1555.2,194.1 1556.0,193.0 1556.8,195.4 1557.6,197.8 1558.4,202.3 1559.3,200.1 1560.1,196.0 1560.9,194.1 1561.7,193.2 1562.5,201.6 1563.3,206.4 1564.2,201.2 1565.0,201.7 1565.8,196.3 1566.6,197.4 1567.4,199.0 1568.2,200.1 1569.0,203.0 1569.9,200.1 1570.7,200.3 1571.5,195.7 1572.3,201.8 1573.1,201.1 1573.9,195.1 1574.7,192.7 1575.6,199.7 1576.4,204.0 1577.2,199.9 1578.0,194.2 1578.8,193.1 1579.6,203.2 1580.4,205.8 1581.3,197.9 1582.1,204.4 1582.9,194.8 1583.7,201.1 1584.5,200.2 1585.3,204.1 1586.1,207.8 1587.0,202.6 1587.8,199.8 1588.6,200.9 1589.4,197.3 1590.2,196.2 1591.0,206.0 1591.8,201.2 1592.7,196.6 1593.5,196.9 1594.3,196.9 1595.1,193.1 1595.9,201.5 1596.7,198.9 1597.6,201.3 1598.4,210.6 1599.2,205.2 1600.0,200.1 1600.8,203.2 1601.6,193.1 1602.4,211.5 1603.3,201.8 1604.1,206.8 1604.9,206.6 1605.7,194.4 1606.5,205.0 1607.3,204.2 1608.1,201.3 1609.0,201.6 1609.8,203.2 1610.6,205.5 1611.4,199.6 1612.2,199.3 1613.0,210.2 1613.8,200.0 1614.7,204.1 1615.5,201.4 1616.3,198.6 1617.1,207.3 1617.9,211.7 1618.7,204.0 1619.5,204.9 1620.4,198.8 1621.2,194.8 1622.0,198.7 1622.8,208.5 1623.6,208.1 1624.4,196.3 1625.3,200.5 1626.1,204.8 1626.9,198.9 1627.7,193.0 1628.5,198.5 1629.3,194.7 1630.1,199.0 1631.0,202.5 1631.8,196.5 1632.6,199.3 1633.4,203.4 1634.2,204.3 1635.0,201.3 1635.8,205.3 1636.7,204.6 1637.5,202.2 1638.3,203.0 1639.1,205.6 1639.9,206.1 1640.7,213.4 1641.5,196.8 1642.4,197.0 1643.2,207.8 1644.0,200.4 1644.8,206.5 1645.6,199.4 1646.4,202.8 1647.2,202.0 1648.1,215.2 1648.9,195.7 1649.7,199.1 1650.5,199.1 1651.3,201.9 1652.1,211.4 1653.0,204.8 1653.8,201.7 1654.6,198.5 1655.4,203.1 1656.2,209.1 1657.0,195.7 1657.8,203.9 1658.7,194.2 1659.5,199.2 1660.3,203.2 1661.1,196.6 1661.9,204.3 1662.7,215.8 1663.5,204.7 1664.4,203.3 1665.2,208.2 1666.0,203.3 1666.8,202.9 1667.6,205.9 1668.4,204.6 1669.2,203.8 1670.1,202.5 1670.9,203.6 1671.7,206.2 1672.5,204.4 1673.3,204.4 1674.1,199.4 1674.9,203.9 1675.8,200.4 1676.6,205.6 1677.4,199.0 1678.2,200.8 1679.0,204.4 1679.8,202.9 1680.6,202.3 1681.5,196.8 1682.3,207.1 1683.1,201.9 1683.9,205.2 1684.7,208.9 1685.5,200.4 1686.4,209.6 1687.2,203.9 1688.0,199.3 1688.8,212.5 1689.6,207.3 1690.4,205.5 1691.2,206.2 1692.1,204.6 1692.9,199.5 1693.7,201.9 1694.5,203.9 1695.3,201.9 1696.1,204.4 1696.9,203.7 1697.8,203.9 1698.6,206.2 1699.4,204.0 1700.2,205.0 1701.0,197.6 1701.8,197.7 1702.6,200.8 1703.5,204.9 1704.3,212.0 1705.1,200.2 1705.9,202.0 1706.7,209.5 1707.5,200.9 1708.3,206.4 1709.2,194.4 1710.0,204.3 1710.8,201.4 1711.6,213.6 1712.4,197.0 1713.2,204.6 1714.1,196.1 1714.9,199.4 1715.7,202.1 1716.5,204.0 1717.3,208.9 1718.1,209.0 1718.9,217.8 1719.8,221.6 1720.6,223.0 1721.4,228.3 1722.2,226.4 1723.0,227.2 1723.8,224.3 1724.6,228.4 1725.5,225.4 1726.3,226.7 1727.1,226.7 1727.9,228.2 1728.7,222.7 1729.5,231.6 1730.3,231.4 1731.2,227.5 1732.0,226.6 1732.8,224.2 1733.6,225.4 1734.4,224.8 1735.2,224.5 1736.0,224.0 1736.9,230.9 1737.7,227.6 1738.5,232.5 1739.3,235.6 1740.1,238.0 1740.9,230.7 1741.8,228.6 1742.6,226.5 1743.4,224.0 1744.2,221.7 1745.0,228.4 1745.8,225.7 1746.6,224.8 1747.5,227.6 1748.3,230.1 1749.1,228.0 1749.9,224.5 1750.7,224.0 1751.5,225.4 1752.3,230.4 1753.2,225.8 1754.0,226.6 1754.8,223.3 1755.6,223.8 1756.4,228.2 1757.2,228.6 1758.0,226.9 1758.9,219.7 1759.7,222.9 1760.5,229.8 1761.3,222.1 1762.1,221.7 1762.9,230.1 1763.7,229.3 1764.6,226.2 1765.4,230.2 1766.2,230.6 1767.0,221.5 1767.8,234.3 1768.6,229.5 1769.4,226.4 1770.3,223.4 1771.1,223.7 1771.9,220.7 1772.7,222.9 1773.5,225.8 1774.3,229.2 1775.2,223.8 1776.0,228.7 1776.8,222.7 1777.6,227.9 1778.4,221.4 1779.2,218.8 1780.0,225.3 1780.9,220.9 1781.7,225.1 1782.5,222.9 1783.3,222.4 1784.1,223.5 1784.9,218.4 1785.7,223.4 1786.6,219.9 1787.4,221.0 1788.2,225.8 1789.0,223.7 1789.8,232.5 1790.6,223.2 1791.4,224.8 1792.3,220.7 1793.1,234.3 1793.9,225.9 1794.7,222.0 1795.5,224.4 1796.3,223.1 1797.1,225.0 1798.0,229.2 1798.8,226.9 1799.6,222.8 1800.4,237.0 1801.2,232.3 1802.0,227.2 1802.9,223.7 1803.7,226.9 1804.5,220.3 1805.3,224.3 1806.1,227.4 1806.9,223.8 1807.7,224.3 1808.6,222.9 1809.4,231.8 1810.2,222.7 1811.0,227.1 1811.8,224.9 1812.6,225.6 1813.4,224.7 1814.3,228.8 1815.1,224.4 1815.9,223.2 1816.7,219.5 1817.5,221.2 1818.3,229.2 1819.1,223.9 1820.0,224.3 1820.8,221.7 1821.6,225.8 1822.4,234.9 1823.2,222.1 1824.0,229.8 1824.8,230.8 1825.7,227.9 1826.5,223.1 1827.3,224.2 1828.1,221.5 1828.9,230.0 1829.7,227.3 1830.6,222.9 1831.4,225.9 1832.2,225.9 1833.0,223.9 1833.8,226.6 1834.6,225.3 1835.4,227.9 1836.3,229.9 1837.1,224.6 1837.9,224.6 1838.7,223.1 1839.5,225.4 1840.3,225.2 1841.1,229.8 1842.0,220.5 1842.8,224.5 1843.6,221.5 1844.4,228.2 1844.4,274.3" fill="url(#sg)"/>
<path d="M833.0 123.5H1845.2 M833.0 161.2H1845.2 M833.0 198.9H1845.2 M833.0 236.6H1845.2 M920.3 85.8V274.3 M1019.1 85.8V274.3 M1118.0 85.8V274.3 M1216.8 85.8V274.3 M1315.7 85.8V274.3 M1414.5 85.8V274.3 M1513.3 85.8V274.3 M1612.2 85.8V274.3 M1711.0 85.8V274.3 M1809.9 85.8V274.3" stroke="#858590" stroke-width="1" fill="none"/>
<polyline points="834.2,226.1 835.0,225.5 835.8,224.6 836.6,228.4 837.5,227.5 838.3,224.6 839.1,227.9 839.9,227.0 840.7,223.8 841.5,223.8 842.3,228.1 843.2,227.0 844.0,229.0 844.8,227.1 845.6,224.7 846.4,226.3 847.2,222.6 848.0,226.2 848.9,227.5 849.7,225.6 850.5,225.9 851.3,227.4 852.1,225.6 852.9,224.6 853.8,229.5 854.6,233.1 855.4,219.6 856.2,225.5 857.0,233.5 857.8,224.5 858.6,220.8 859.5,228.6 860.3,223.9 861.1,223.2 861.9,230.3 862.7,221.1 863.5,229.2 864.3,227.0 865.2,224.2 866.0,220.7 866.8,226.1 867.6,230.4 868.4,223.8 869.2,226.8 870.0,223.1 870.9,226.2 871.7,223.3 872.5,228.5 873.3,222.9 874.1,220.6 874.9,233.7 875.7,225.3 876.6,222.5 877.4,223.8 878.2,218.2 879.0,224.7 879.8,222.7 880.6,222.1 881.5,225.7 882.3,224.3 883.1,224.2 883.9,222.8 884.7,224.0 885.5,224.9 886.3,231.9 887.2,223.9 888.0,222.3 888.8,229.0 889.6,227.0 890.4,220.2 891.2,223.6 892.0,227.6 892.9,219.9 893.7,222.5 894.5,226.3 895.3,220.6 896.1,232.6 896.9,221.0 897.7,223.3 898.6,219.9 899.4,226.5 900.2,229.3 901.0,223.8 901.8,224.7 902.6,223.5 903.4,226.4 904.3,224.6 905.1,223.8 905.9,229.9 906.7,227.1 907.5,226.0 908.3,226.2 909.2,228.3 910.0,226.2 910.8,230.7 911.6,229.8 912.4,223.0 913.2,224.0 914.0,230.8 914.9,222.9 915.7,222.8 916.5,226.9 917.3,225.6 918.1,233.4 918.9,223.0 919.7,225.3 920.6,227.4 921.4,224.5 922.2,227.4 923.0,229.3 923.8,225.8 924.6,222.5 925.4,226.9 926.3,228.6 927.1,222.7 927.9,224.5 928.7,224.6 929.5,221.9 930.3,225.7 931.1,224.6 932.0,224.0 932.8,228.1 933.6,227.4 934.4,222.5 935.2,228.0 936.0,230.8 936.8,225.6 937.7,228.7 938.5,229.0 939.3,224.8 940.1,230.3 940.9,226.5 941.7,226.8 942.6,226.8 943.4,229.3 944.2,222.1 945.0,220.5 945.8,224.4 946.6,226.8 947.4,228.4 948.3,227.8 949.1,224.5 949.9,225.6 950.7,228.9 951.5,225.3 952.3,224.5 953.1,229.3 954.0,219.4 954.8,227.4 955.6,229.5 956.4,224.8 957.2,221.0 958.0,216.2 958.8,210.7 959.7,205.5 960.5,200.0 961.3,207.3 962.1,194.4 962.9,203.4 963.7,211.8 964.5,199.1 965.4,200.9 966.2,202.4 967.0,204.0 967.8,202.2 968.6,201.3 969.4,201.7 970.3,206.0 971.1,203.8 971.9,202.8 972.7,199.3 973.5,199.8 974.3,202.2 975.1,207.0 976.0,203.7 976.8,202.0 977.6,201.1 978.4,201.6 979.2,201.5 980.0,197.6 980.8,210.5 981.7,213.6 982.5,204.7 983.3,212.5 984.1,198.4 984.9,200.0 985.7,208.9 986.5,204.8 987.4,207.3 988.2,200.1 989.0,202.5 989.8,205.4 990.6,208.6 991.4,204.2 992.2,202.5 993.1,205.6 993.9,204.0 994.7,202.7 995.5,207.7 996.3,210.6 997.1,208.0 998.0,196.8 998.8,203.6 999.6,203.8 1000.4,204.4 1001.2,202.8 1002.0,206.0 1002.8,195.7 1003.7,198.8 1004.5,198.7 1005.3,200.6 1006.1,201.7 1006.9,200.4 1007.7,202.7 1008.5,197.3 1009.4,212.4 1010.2,202.8 1011.0,198.8 1011.8,197.3 1012.6,198.4 1013.4,198.4 1014.2,200.0 1015.1,199.8 1015.9,193.9 1016.7,197.9 1017.5,196.0 1018.3,200.2 1019.1,216.8 1019.9,212.2 1020.8,201.5 1021.6,196.5 1022.4,204.3 1023.2,195.5 1024.0,203.8 1024.8,197.4 1025.6,195.4 1026.5,201.0 1027.3,202.1 1028.1,199.0 1028.9,194.5 1029.7,201.1 1030.5,207.4 1031.4,199.5 1032.2,199.6 1033.0,200.9 1033.8,216.0 1034.6,201.4 1035.4,197.9 1036.2,204.4 1037.1,208.0 1037.9,207.8 1038.7,204.4 1039.5,195.6 1040.3,209.1 1041.1,201.0 1041.9,201.1 1042.8,193.6 1043.6,206.6 1044.4,204.6 1045.2,198.4 1046.0,203.4 1046.8,205.7 1047.6,199.0 1048.5,199.4 1049.3,203.3 1050.1,196.2 1050.9,198.2 1051.7,195.3 1052.5,197.3 1053.3,202.4 1054.2,207.2 1055.0,204.3 1055.8,199.9 1056.6,207.5 1057.4,208.6 1058.2,202.5 1059.1,213.5 1059.9,200.3 1060.7,196.5 1061.5,205.8 1062.3,200.0 1063.1,196.0 1063.9,197.5 1064.8,200.9 1065.6,200.4 1066.4,196.1 1067.2,201.5 1068.0,199.4 1068.8,200.3 1069.6,204.3 1070.5,201.7 1071.3,201.1 1072.1,207.7 1072.9,203.5 1073.7,199.5 1074.5,204.0 1075.3,195.9 1076.2,195.6 1077.0,201.0 1077.8,196.3 1078.6,198.4 1079.4,195.2 1080.2,201.1 1081.0,203.3 1081.9,203.4 1082.7,204.7 1083.5,197.1 1084.3,204.4 1085.1,194.1 1085.9,199.5 1086.8,205.4 1087.6,200.8 1088.4,192.7 1089.2,200.6 1090.0,197.3 1090.8,200.8 1091.6,205.6 1092.5,196.6 1093.3,200.7 1094.1,208.0 1094.9,200.3 1095.7,196.3 1096.5,203.8 1097.3,197.9 1098.2,196.5 1099.0,197.8 1099.8,204.6 1100.6,205.7 1101.4,199.4 1102.2,194.2 1103.0,200.2 1103.9,202.7 1104.7,197.6 1105.5,199.9 1106.3,204.3 1107.1,210.0 1107.9,202.9 1108.7,197.6 1109.6,202.7 1110.4,202.8 1111.2,196.9 1112.0,199.3 1112.8,204.0 1113.6,203.0 1114.4,202.7 1115.3,196.8 1116.1,195.6 1116.9,194.9 1117.7,205.3 1118.5,196.0 1119.3,210.5 1120.2,204.7 1121.0,200.3 1121.8,203.3 1122.6,201.8 1123.4,201.1 1124.2,201.3 1125.0,204.6 1125.9,198.4 1126.7,202.0 1127.5,206.6 1128.3,201.9 1129.1,198.9 1129.9,206.7 1130.7,198.8 1131.6,204.1 1132.4,199.2 1133.2,199.8 1134.0,194.8 1134.8,199.2 1135.6,203.9 1136.4,207.7 1137.3,200.4 1138.1,202.9 1138.9,194.8 1139.7,198.0 1140.5,196.5 1141.3,200.3 1142.1,205.6 1143.0,203.4 1143.8,208.0 1144.6,207.0 1145.4,196.3 1146.2,200.5 1147.0,200.3 1147.9,199.1 1148.7,196.6 1149.5,196.8 1150.3,202.0 1151.1,202.6 1151.9,194.8 1152.7,196.4 1153.6,202.7 1154.4,204.9 1155.2,198.7 1156.0,198.4 1156.8,201.6 1157.6,210.4 1158.4,199.6 1159.3,201.5 1160.1,211.1 1160.9,204.7 1161.7,200.2 1162.5,204.2 1163.3,193.4 1164.1,202.8 1165.0,200.4 1165.8,200.3 1166.6,205.3 1167.4,197.3 1168.2,213.5 1169.0,199.5 1169.8,203.6 1170.7,205.8 1171.5,203.3 1172.3,201.1 1173.1,201.3 1173.9,208.4 1174.7,193.5 1175.5,200.2 1176.4,207.6 1177.2,193.5 1178.0,203.2 1178.8,199.1 1179.6,200.5 1180.4,198.2 1181.3,199.7 1182.1,201.0 1182.9,207.7 1183.7,201.4 1184.5,204.7 1185.3,203.5 1186.1,200.4 1187.0,202.6 1187.8,201.2 1188.6,204.5 1189.4,205.5 1190.2,208.4 1191.0,212.9 1191.8,209.5 1192.7,203.8 1193.5,196.8 1194.3,207.7 1195.1,204.0 1195.9,205.9 1196.7,201.8 1197.5,195.5 1198.4,197.5 1199.2,204.9 1200.0,205.2 1200.8,202.1 1201.6,205.5 1202.4,205.8 1203.2,207.6 1204.1,201.3 1204.9,206.8 1205.7,195.7 1206.5,204.2 1207.3,204.3 1208.1,201.4 1209.0,202.2 1209.8,199.7 1210.6,209.7 1211.4,202.9 1212.2,202.2 1213.0,208.0 1213.8,205.0 1214.7,200.3 1215.5,199.8 1216.3,208.0 1217.1,204.8 1217.9,206.8 1218.7,200.6 1219.5,207.7 1220.4,202.5 1221.2,198.0 1222.0,203.5 1222.8,198.9 1223.6,196.7 1224.4,206.3 1225.2,205.8 1226.1,205.3 1226.9,204.3 1227.7,202.0 1228.5,207.9 1229.3,201.2 1230.1,205.1 1230.9,197.8 1231.8,213.0 1232.6,201.9 1233.4,212.5 1234.2,196.9 1235.0,199.6 1235.8,209.3 1236.7,200.7 1237.5,204.4 1238.3,197.4 1239.1,197.0 1239.9,200.7 1240.7,203.4 1241.5,213.7 1242.4,200.8 1243.2,198.9 1244.0,203.7 1244.8,200.2 1245.6,205.2 1246.4,201.8 1247.2,202.8 1248.1,204.8 1248.9,204.4 1249.7,203.2 1250.5,203.4 1251.3,204.0 1252.1,204.5 1252.9,204.5 1253.8,202.5 1254.6,205.0 1255.4,201.5 1256.2,205.5 1257.0,198.9 1257.8,206.6 1258.6,208.4 1259.5,212.9 1260.3,204.4 1261.1,205.1 1261.9,201.7 1262.7,204.5 1263.5,206.6 1264.3,198.8 1265.2,204.3 1266.0,198.5 1266.8,202.0 1267.6,197.4 1268.4,203.3 1269.2,200.1 1270.1,205.5 1270.9,203.0 1271.7,202.7 1272.5,200.9 1273.3,199.5 1274.1,204.5 1274.9,199.0 1275.8,207.1 1276.6,203.4 1277.4,200.9 1278.2,197.7 1279.0,198.9 1279.8,200.7 1280.6,207.9 1281.5,194.7 1282.3,199.3 1283.1,196.9 1283.9,195.3 1284.7,200.5 1285.5,204.4 1286.3,199.1 1287.2,203.6 1288.0,198.7 1288.8,203.2 1289.6,199.3 1290.4,203.1 1291.2,212.0 1292.0,197.2 1292.9,202.8 1293.7,193.1 1294.5,199.8 1295.3,205.5 1296.1,198.9 1296.9,204.5 1297.8,206.5 1298.6,204.5 1299.4,200.3 1300.2,198.9 1301.0,198.7 1301.8,198.3 1302.6,197.4 1303.5,194.3 1304.3,201.6 1305.1,195.8 1305.9,198.9 1306.7,206.6 1307.5,195.3 1308.3,204.4 1309.2,197.0 1310.0,200.2 1310.8,196.2 1311.6,193.4 1312.4,196.6 1313.2,207.3 1314.0,200.0 1314.9,202.3 1315.7,201.5 1316.5,201.3 1317.3,197.1 1318.1,200.2 1318.9,205.0 1319.7,193.6 1320.6,202.9 1321.4,203.2 1322.2,206.3 1323.0,202.7 1323.8,205.0 1324.6,194.5 1325.5,196.2 1326.3,213.4 1327.1,198.5 1327.9,201.8 1328.7,206.7 1329.5,206.9 1330.3,198.0 1331.2,200.6 1332.0,196.7 1332.8,204.1 1333.6,193.3 1334.4,198.6 1335.2,201.1 1336.0,196.4 1336.9,199.7 1337.7,202.2 1338.5,204.5 1339.3,199.5 1340.1,213.3 1340.9,203.4 1341.7,205.8 1342.6,196.7 1343.4,195.7 1344.2,202.3 1345.0,202.3 1345.8,193.9 1346.6,199.3 1347.4,194.1 1348.3,200.7 1349.1,197.7 1349.9,210.0 1350.7,202.1 1351.5,196.8 1352.3,197.4 1353.1,207.5 1354.0,192.2 1354.8,204.1 1355.6,197.1 1356.4,200.1 1357.2,202.8 1358.0,201.6 1358.9,195.8 1359.7,205.6 1360.5,199.4 1361.3,211.7 1362.1,202.6 1362.9,211.9 1363.7,201.8 1364.6,198.9 1365.4,211.5 1366.2,200.4 1367.0,202.2 1367.8,201.8 1368.6,197.4 1369.4,198.0 1370.3,194.5 1371.1,194.7 1371.9,201.7 1372.7,195.6 1373.5,195.9 1374.3,200.5 1375.1,202.3 1376.0,203.4 1376.8,203.7 1377.6,197.4 1378.4,202.6 1379.2,200.0 1380.0,204.4 1380.8,205.4 1381.7,211.5 1382.5,193.8 1383.3,198.0 1384.1,201.9 1384.9,205.8 1385.7,195.4 1386.6,207.5 1387.4,202.2 1388.2,201.3 1389.0,209.2 1389.8,202.5 1390.6,197.1 1391.4,198.7 1392.3,211.6 1393.1,196.9 1393.9,207.8 1394.7,202.5 1395.5,202.8 1396.3,206.5 1397.1,196.8 1398.0,201.8 1398.8,200.3 1399.6,208.0 1400.4,206.0 1401.2,194.9 1402.0,202.0 1402.8,202.9 1403.7,201.6 1404.5,205.8 1405.3,211.5 1406.1,207.6 1406.9,202.7 1407.7,198.9 1408.5,200.1 1409.4,208.8 1410.2,206.6 1411.0,206.1 1411.8,195.1 1412.6,207.1 1413.4,205.4 1414.3,200.5 1415.1,196.2 1415.9,199.6 1416.7,199.1 1417.5,195.9 1418.3,208.2 1419.1,199.7 1420.0,203.3 1420.8,198.2 1421.6,204.9 1422.4,197.4 1423.2,194.1 1424.0,214.7 1424.8,205.4 1425.7,203.6 1426.5,199.2 1427.3,195.4 1428.1,204.5 1428.9,195.1 1429.7,204.4 1430.5,194.2 1431.4,201.8 1432.2,196.9 1433.0,211.3 1433.8,211.2 1434.6,196.9 1435.4,212.0 1436.2,195.5 1437.1,207.2 1437.9,203.0 1438.7,197.5 1439.5,201.3 1440.3,201.7 1441.1,201.1 1441.9,203.2 1442.8,198.9 1443.6,199.6 1444.4,200.2 1445.2,200.5 1446.0,204.8 1446.8,206.8 1447.7,217.4 1448.5,196.0 1449.3,202.5 1450.1,201.1 1450.9,200.9 1451.7,206.5 1452.5,213.5 1453.4,201.7 1454.2,204.4 1455.0,202.6 1455.8,204.8 1456.6,216.0 1457.4,219.0 1458.2,201.5 1459.1,204.4 1459.9,207.0 1460.7,204.7 1461.5,206.7 1462.3,210.5 1463.1,213.6 1463.9,206.3 1464.8,200.7 1465.6,204.3 1466.4,200.1 1467.2,201.8 1468.0,209.5 1468.8,203.1 1469.6,198.6 1470.5,208.5 1471.3,206.3 1472.1,207.8 1472.9,205.5 1473.7,206.7 1474.5,207.4 1475.4,210.2 1476.2,198.9 1477.0,208.6 1477.8,203.9 1478.6,204.7 1479.4,205.4 1480.2,198.9 1481.1,204.1 1481.9,200.3 1482.7,208.7 1483.5,197.0 1484.3,203.8 1485.1,214.2 1485.9,197.9 1486.8,202.1 1487.6,203.5 1488.4,209.2 1489.2,199.7 1490.0,201.6 1490.8,196.5 1491.6,199.0 1492.5,197.7 1493.3,198.7 1494.1,201.4 1494.9,198.9 1495.7,204.0 1496.5,197.4 1497.3,204.1 1498.2,202.4 1499.0,197.0 1499.8,198.9 1500.6,200.6 1501.4,200.8 1502.2,201.3 1503.1,200.6 1503.9,198.7 1504.7,202.8 1505.5,202.5 1506.3,201.2 1507.1,208.2 1507.9,203.2 1508.8,194.4 1509.6,205.0 1510.4,200.7 1511.2,201.5 1512.0,200.7 1512.8,202.6 1513.6,212.8 1514.5,213.5 1515.3,202.5 1516.1,207.1 1516.9,201.5 1517.7,203.2 1518.5,200.1 1519.3,202.7 1520.2,201.0 1521.0,197.7 1521.8,202.8 1522.6,205.1 1523.4,204.9 1524.2,197.6 1525.0,200.8 1525.9,210.5 1526.7,198.9 1527.5,203.8 1528.3,199.0 1529.1,200.2 1529.9,195.5 1530.7,196.1 1531.6,194.6 1532.4,197.3 1533.2,194.4 1534.0,201.0 1534.8,201.0 1535.6,194.9 1536.5,200.8 1537.3,207.6 1538.1,200.6 1538.9,201.0 1539.7,208.4 1540.5,195.1 1541.3,204.8 1542.2,200.8 1543.0,209.5 1543.8,200.1 1544.6,200.9 1545.4,199.4 1546.2,197.5 1547.0,203.6 1547.9,204.8 1548.7,199.9 1549.5,200.8 1550.3,210.9 1551.1,199.8 1551.9,203.9 1552.7,202.1 1553.6,211.5 1554.4,212.5 1555.2,194.1 1556.0,193.0 1556.8,195.4 1557.6,197.8 1558.4,202.3 1559.3,200.1 1560.1,196.0 1560.9,194.1 1561.7,193.2 1562.5,201.6 1563.3,206.4 1564.2,201.2 1565.0,201.7 1565.8,196.3 1566.6,197.4 1567.4,199.0 1568.2,200.1 1569.0,203.0 1569.9,200.1 1570.7,200.3 1571.5,195.7 1572.3,201.8 1573.1,201.1 1573.9,195.1 1574.7,192.7 1575.6,199.7 1576.4,204.0 1577.2,199.9 1578.0,194.2 1578.8,193.1 1579.6,203.2 1580.4,205.8 1581.3,197.9 1582.1,204.4 1582.9,194.8 1583.7,201.1 1584.5,200.2 1585.3,204.1 1586.1,207.8 1587.0,202.6 1587.8,199.8 1588.6,200.9 1589.4,197.3 1590.2,196.2 1591.0,206.0 1591.8,201.2 1592.7,196.6 1593.5,196.9 1594.3,196.9 1595.1,193.1 1595.9,201.5 1596.7,198.9 1597.6,201.3 1598.4,210.6 1599.2,205.2 1600.0,200.1 1600.8,203.2 1601.6,193.1 1602.4,211.5 1603.3,201.8 1604.1,206.8 1604.9,206.6 1605.7,194.4 1606.5,205.0 1607.3,204.2 1608.1,201.3 1609.0,201.6 1609.8,203.2 1610.6,205.5 1611.4,199.6 1612.2,199.3 1613.0,210.2 1613.8,200.0 1614.7,204.1 1615.5,201.4 1616.3,198.6 1617.1,207.3 1617.9,211.7 1618.7,204.0 1619.5,204.9 1620.4,198.8 1621.2,194.8 1622.0,198.7 1622.8,208.5 1623.6,208.1 1624.4,196.3 1625.3,200.5 1626.1,204.8 1626.9,198.9 1627.7,193.0 1628.5,198.5 1629.3,194.7 1630.1,199.0 1631.0,202.5 1631.8,196.5 1632.6,199.3 1633.4,203.4 1634.2,204.3 1635.0,201.3 1635.8,205.3 1636.7,204.6 1637.5,202.2 1638.3,203.0 1639.1,205.6 1639.9,206.1 1640.7,213.4 1641.5,196.8 1642.4,197.0 1643.2,207.8 1644.0,200.4 1644.8,206.5 1645.6,199.4 1646.4,202.8 1647.2,202.0 1648.1,215.2 1648.9,195.7 1649.7,199.1 1650.5,199.1 1651.3,201.9 1652.1,211.4 1653.0,204.8 1653.8,201.7 1654.6,198.5 1655.4,203.1 1656.2,209.1 1657.0,195.7 1657.8,203.9 1658.7,194.2 1659.5,199.2 1660.3,203.2 1661.1,196.6 1661.9,204.3 1662.7,215.8 1663.5,204.7 1664.4,203.3 1665.2,208.2 1666.0,203.3 1666.8,202.9 1667.6,205.9 1668.4,204.6 1669.2,203.8 1670.1,202.5 1670.9,203.6 1671.7,206.2 1672.5,204.4 1673.3,204.4 1674.1,199.4 1674.9,203.9 1675.8,200.4 1676.6,205.6 1677.4,199.0 1678.2,200.8 1679.0,204.4 1679.8,202.9 1680.6,202.3 1681.5,196.8 1682.3,207.1 1683.1,201.9 1683.9,205.2 1684.7,208.9 1685.5,200.4 1686.4,209.6 1687.2,203.9 1688.0,199.3 1688.8,212.5 1689.6,207.3 1690.4,205.5 1691.2,206.2 1692.1,204.6 1692.9,199.5 1693.7,201.9 1694.5,203.9 1695.3,201.9 1696.1,204.4 1696.9,203.7 1697.8,203.9 1698.6,206.2 1699.4,204.0 1700.2,205.0 1701.0,197.6 1701.8,197.7 1702.6,200.8 1703.5,204.9 1704.3,212.0 1705.1,200.2 1705.9,202.0 1706.7,209.5 1707.5,200.9 1708.3,206.4 1709.2,194.4 1710.0,204.3 1710.8,201.4 1711.6,213.6 1712.4,197.0 1713.2,204.6 1714.1,196.1 1714.9,199.4 1715.7,202.1 1716.5,204.0 1717.3,208.9 1718.1,209.0 1718.9,217.8 1719.8,221.6 1720.6,223.0 1721.4,228.3 1722.2,226.4 1723.0,227.2 1723.8,224.3 1724.6,228.4 1725.5,225.4 1726.3,226.7 1727.1,226.7 1727.9,228.2 1728.7,222.7 1729.5,231.6 1730.3,231.4 1731.2,227.5 1732.0,226.6 1732.8,224.2 1733.6,225.4 1734.4,224.8 1735.2,224.5 1736.0,224.0 1736.9,230.9 1737.7,227.6 1738.5,232.5 1739.3,235.6 1740.1,238.0 1740.9,230.7 1741.8,228.6 1742.6,226.5 1743.4,224.0 1744.2,221.7 1745.0,228.4 1745.8,225.7 1746.6,224.8 1747.5,227.6 1748.3,230.1 1749.1,228.0 1749.9,224.5 1750.7,224.0 1751.5,225.4 1752.3,230.4 1753.2,225.8 1754.0,226.6 1754.8,223.3 1755.6,223.8 1756.4,228.2 1757.2,228.6 1758.0,226.9 1758.9,219.7 1759.7,222.9 1760.5,229.8 1761.3,222.1 1762.1,221.7 1762.9,230.1 1763.7,229.3 1764.6,226.2 1765.4,230.2 1766.2,230.6 1767.0,221.5 1767.8,234.3 1768.6,229.5 1769.4,226.4 1770.3,223.4 1771.1,223.7 1771.9,220.7 1772.7,222.9 1773.5,225.8 1774.3,229.2 1775.2,223.8 1776.0,228.7 1776.8,222.7 1777.6,227.9 1778.4,221.4 1779.2,218.8 1780.0,225.3 1780.9,220.9 1781.7,225.1 1782.5,222.9 1783.3,222.4 1784.1,223.5 1784.9,218.4 1785.7,223.4 1786.6,219.9 1787.4,221.0 1788.2,225.8 1789.0,223.7 1789.8,232.5 1790.6,223.2 1791.4,224.8 1792.3,220.7 1793.1,234.3 1793.9,225.9 1794.7,222.0 1795.5,224.4 1796.3,223.1 1797.1,225.0 1798.0,229.2 1798.8,226.9 1799.6,222.8 1800.4,237.0 1801.2,232.3 1802.0,227.2 1802.9,223.7 1803.7,226.9 1804.5,220.3 1805.3,224.3 1806.1,227.4 1806.9,223.8 1807.7,224.3 1808.6,222.9 1809.4,231.8 1810.2,222.7 1811.0,227.1 1811.8,224.9 1812.6,225.6 1813.4,224.7 1814.3,228.8 1815.1,224.4 1815.9,223.2 1816.7,219.5 1817.5,221.2 1818.3,229.2 1819.1,223.9 1820.0,224.3 1820.8,221.7 1821.6,225.8 1822.4,234.9 1823.2,222.1 1824.0,229.8 1824.8,230.8 1825.7,227.9 1826.5,223.1 1827.3,224.2 1828.1,221.5 1828.9,230.0 1829.7,227.3 1830.6,222.9 1831.4,225.9 1832.2,225.9 1833.0,223.9 1833.8,226.6 1834.6,225.3 1835.4,227.9 1836.3,229.9 1837.1,224.6 1837.9,224.6 1838.7,223.1 1839.5,225.4 1840.3,225.2 1841.1,229.8 1842.0,220.5 1842.8,224.5 1843.6,221.5 1844.4,228.2" fill="none" stroke="#ececec" stroke-width="1.3" stroke-linejoin="round"/>
<path d="M833.0 85.8H1845.2V274.3H833.0" stroke="#a2a2a2" stroke-width="1.6" fill="none"/>
<path d="M833.0 85.0V275.1" stroke="#d23c3c" stroke-width="1.6"/>
<path d="M1339.4 86.8V273.3" stroke="#ffff3c" stroke-width="1.1"/>
<text x="817.5" y="90.3" text-anchor="end" style="font-family:&quot;Liberation Sans&quot;,sans-serif;fill:#fff;font-size:16px">40.0</text>
<text x="817.5" y="129.2" text-anchor="end" style="font-family:&quot;Liberation Sans&quot;,sans-serif;fill:#fff;font-size:16px">20.0</text>
<text x="817.5" y="166.9" text-anchor="end" style="font-family:&quot;Liberation Sans&quot;,sans-serif;fill:#fff;font-size:16px">0.0</text>
<text x="817.5" y="204.6" text-anchor="end" style="font-family:&quot;Liberation Sans&quot;,sans-serif;fill:#fff;font-size:16px">-20.0</text>
<text x="817.5" y="242.3" text-anchor="end" style="font-family:&quot;Liberation Sans&quot;,sans-serif;fill:#fff;font-size:16px">-40.0</text>
<text x="817.5" y="280.0" text-anchor="end" style="font-family:&quot;Liberation Sans&quot;,sans-serif;fill:#fff;font-size:16px">-60.0</text>
<text x="920.3" y="294" text-anchor="middle" style="font-family:&quot;Liberation Sans&quot;,sans-serif;fill:#fff;font-size:16px">224.8</text>
<text x="1019.1" y="294" text-anchor="middle" style="font-family:&quot;Liberation Sans&quot;,sans-serif;fill:#fff;font-size:16px">225</text>
<text x="1118.0" y="294" text-anchor="middle" style="font-family:&quot;Liberation Sans&quot;,sans-serif;fill:#fff;font-size:16px">225.2</text>
<text x="1216.8" y="294" text-anchor="middle" style="font-family:&quot;Liberation Sans&quot;,sans-serif;fill:#fff;font-size:16px">225.4</text>
<text x="1315.7" y="294" text-anchor="middle" style="font-family:&quot;Liberation Sans&quot;,sans-serif;fill:#fff;font-size:16px">225.6</text>
<text x="1414.5" y="294" text-anchor="middle" style="font-family:&quot;Liberation Sans&quot;,sans-serif;fill:#fff;font-size:16px">225.8</text>
<text x="1513.3" y="294" text-anchor="middle" style="font-family:&quot;Liberation Sans&quot;,sans-serif;fill:#fff;font-size:16px">226</text>
<text x="1612.2" y="294" text-anchor="middle" style="font-family:&quot;Liberation Sans&quot;,sans-serif;fill:#fff;font-size:16px">226.2</text>
<text x="1711.0" y="294" text-anchor="middle" style="font-family:&quot;Liberation Sans&quot;,sans-serif;fill:#fff;font-size:16px">226.4</text>
<text x="1809.9" y="294" text-anchor="middle" style="font-family:&quot;Liberation Sans&quot;,sans-serif;fill:#fff;font-size:16px">226.6</text>
<text x="1339" y="322" text-anchor="middle" style="font-family:&quot;Liberation Sans&quot;,sans-serif;fill:#fff;font-size:20px">Frequency (MHz)</text>
<text transform="translate(751.5 180.5) rotate(-90)" text-anchor="middle" style="font-family:&quot;Liberation Sans&quot;,sans-serif;fill:#fff;font-size:20px">Magnitude (dB)</text>
</svg>
<svg style="left:1190px;top:420px" width="681" height="252" viewBox="1190 420 681 252" >
<rect x="1301.8" y="439.2" width="18.7" height="178.0" fill="#3e3e3e"/>
<path d="M1301.8 475.5H1870.0 M1301.8 511.4H1870.0 M1301.8 547.5H1870.0 M1301.8 582.3H1870.0 M1328.5 439.2V617.2 M1366.6 439.2V617.2 M1404.7 439.2V617.2 M1442.7 439.2V617.2 M1480.8 439.2V617.2 M1518.8 439.2V617.2 M1556.9 439.2V617.2 M1594.9 439.2V617.2 M1633.0 439.2V617.2 M1671.0 439.2V617.2 M1709.1 439.2V617.2 M1747.1 439.2V617.2 M1785.2 439.2V617.2 M1823.2 439.2V617.2 M1861.2 439.2V617.2" stroke="#878787" stroke-width="1.05" fill="none"/>
<path d="M1320.6 439.2V617.2" stroke="#f4f450" stroke-width="1.1" stroke-dasharray="1.1 1.1"/>
<polyline points="1304.3,591.7 1305.2,597.4 1306.1,595.6 1307.0,609.3 1307.8,578.4 1308.7,606.3 1309.6,602.9 1310.5,602.2 1311.4,586.0 1312.3,591.7 1313.1,589.1 1314.0,600.9 1314.9,597.0 1315.8,603.1 1316.7,593.3 1317.6,579.9 1318.4,580.2 1319.3,566.8 1320.2,548.1 1320.7,545.0 1321.1,549.2 1322.0,568.6 1322.9,589.3 1323.7,579.5 1324.6,586.3 1325.5,599.5 1326.4,612.1 1327.3,598.4 1328.2,596.6 1329.0,586.7 1329.9,603.2 1330.8,594.6 1331.7,608.4 1332.6,600.0 1333.5,588.6 1334.4,600.2 1335.2,596.8 1336.1,579.9 1337.0,595.3 1337.9,599.5 1338.8,598.8 1339.7,590.7 1340.5,598.3 1341.4,593.4 1342.3,586.7 1343.2,589.7 1344.1,586.4 1345.0,588.7 1345.8,595.6 1346.7,585.9 1347.6,579.4 1348.5,597.8 1349.4,592.9 1350.3,573.6 1351.1,592.3 1352.0,590.0 1352.9,592.6 1353.8,587.3 1354.7,589.2 1355.6,562.3 1356.5,600.9 1357.3,572.6 1358.2,552.3 1359.0,536.7 1359.1,534.8 1360.0,551.4 1360.9,548.1 1361.8,539.4 1362.6,526.0 1362.8,521.9 1363.5,530.3 1364.4,558.4 1365.3,548.2 1366.2,559.5 1366.9,549.6 1367.1,544.0 1367.9,561.4 1368.8,569.0 1369.7,579.0 1370.6,578.2 1371.5,580.5 1372.4,588.1 1373.2,589.5 1374.1,594.0 1375.0,606.1 1375.9,584.2 1376.8,609.6 1377.7,598.8 1378.5,610.5 1379.4,597.9 1380.3,587.2 1381.2,604.1 1382.1,598.6 1383.0,605.6 1383.9,594.4 1384.7,599.0 1385.6,597.1 1386.5,588.6 1387.4,585.8 1388.3,593.7 1389.2,601.8 1390.0,593.2 1390.9,594.2 1391.8,591.9 1392.7,604.7 1393.6,589.4 1394.5,600.4 1395.3,589.1 1396.2,590.5 1397.1,590.9 1398.0,591.8 1398.9,587.3 1399.8,601.5 1400.6,598.1 1401.5,609.7 1402.4,596.6 1403.3,600.0 1404.2,593.3 1405.1,613.8 1405.9,607.7 1406.8,605.3 1407.7,616.2 1408.6,600.8 1409.5,589.2 1410.4,591.6 1411.3,591.2 1412.1,596.4 1413.0,586.4 1413.9,600.3 1414.8,606.0 1415.7,592.0 1416.6,589.5 1417.4,597.5 1418.3,593.4 1419.2,600.0 1420.1,596.9 1421.0,602.9 1421.9,586.4 1422.7,594.9 1423.6,598.8 1424.5,583.5 1425.4,591.7 1426.3,593.2 1427.2,598.2 1428.0,584.2 1428.9,592.1 1429.8,587.1 1430.7,584.2 1431.6,583.8 1432.5,577.9 1433.4,581.7 1434.2,573.8 1435.1,579.2 1436.0,578.9 1436.9,572.1 1437.8,558.9 1438.7,562.3 1439.5,557.5 1440.4,551.4 1441.3,535.6 1442.2,515.5 1443.0,505.3 1443.1,510.4 1444.0,516.7 1444.8,531.5 1445.7,539.5 1446.6,552.4 1447.5,568.7 1448.4,570.0 1449.3,578.5 1450.1,581.2 1451.0,568.1 1451.9,580.1 1452.8,591.8 1453.7,594.8 1454.6,586.1 1455.4,588.7 1456.3,585.4 1457.2,587.4 1458.1,602.8 1459.0,588.4 1459.9,603.6 1460.8,599.6 1461.6,604.6 1462.5,593.1 1463.4,586.2 1464.3,598.7 1465.2,590.5 1466.1,602.7 1466.9,578.3 1467.8,574.1 1468.7,599.8 1469.6,601.0 1470.5,596.3 1471.4,598.8 1472.2,588.9 1473.1,578.0 1474.0,597.6 1474.9,591.3 1475.8,603.2 1476.7,606.7 1477.5,592.1 1478.4,583.3 1479.3,601.7 1480.2,582.9 1481.1,597.1 1482.0,587.7 1482.8,603.3 1483.7,608.5 1484.6,598.9 1485.5,609.4 1486.4,589.5 1487.3,596.1 1488.2,573.1 1489.0,596.3 1489.9,601.4 1490.8,599.1 1491.7,602.9 1492.6,593.5 1493.5,594.9 1494.3,616.0 1495.2,590.0 1496.1,597.6 1497.0,588.4 1497.9,603.6 1498.8,597.3 1499.6,601.7 1500.5,606.1 1501.4,584.4 1502.3,595.3 1503.2,599.7 1504.1,602.5 1504.9,606.8 1505.8,597.8 1506.7,603.9 1507.6,605.8 1508.5,600.6 1509.4,602.0 1510.3,589.6 1511.1,605.9 1512.0,611.4 1512.9,590.0 1513.8,599.3 1514.7,605.8 1515.6,588.7 1516.4,592.2 1517.3,613.0 1518.2,590.6 1519.1,589.0 1520.0,585.5 1520.9,594.9 1521.7,602.5 1522.6,598.3 1523.5,586.7 1524.4,600.1 1525.3,588.9 1526.2,606.3 1527.0,600.1 1527.9,593.9 1528.8,594.2 1529.7,593.7 1530.6,613.1 1531.5,589.6 1532.3,592.6 1533.2,592.3 1534.1,608.6 1535.0,590.6 1535.9,604.2 1536.8,610.1 1537.7,600.7 1538.5,613.1 1539.4,609.1 1540.3,598.7 1541.2,603.8 1542.1,611.8 1543.0,588.7 1543.8,607.1 1544.7,611.0 1545.6,607.4 1546.5,605.8 1547.4,603.3 1548.3,602.7 1549.1,601.9 1550.0,607.7 1550.9,608.5 1551.8,596.7 1552.7,599.9 1553.6,594.3 1554.4,572.5 1555.2,562.1 1555.3,561.6 1556.2,582.6 1557.1,596.8 1558.0,592.8 1558.9,597.4 1559.7,602.2 1560.6,587.7 1561.5,600.8 1562.4,601.2 1563.3,596.3 1564.2,599.3 1565.1,598.3 1565.9,580.0 1566.8,564.6 1567.5,559.0 1567.7,558.6 1568.6,573.9 1569.5,599.1 1570.4,587.9 1571.2,616.2 1572.1,592.1 1573.0,602.6 1573.9,605.2 1574.8,608.9 1575.7,597.1 1576.5,585.6 1577.4,590.2 1578.3,605.6 1579.2,598.5 1580.1,606.6 1581.0,596.1 1581.8,606.5 1582.7,604.1 1583.6,590.8 1584.5,608.0 1585.4,607.1 1586.3,594.5 1587.2,613.4 1588.0,616.2 1588.9,604.3 1589.8,608.3 1590.7,597.0 1591.6,594.6 1592.5,602.5 1593.3,590.8 1594.2,589.5 1595.1,604.0 1596.0,607.8 1596.9,596.6 1597.8,612.2 1598.6,610.0 1599.5,597.2 1600.4,590.1 1601.3,602.6 1602.2,592.1 1603.1,593.3 1603.9,605.2 1604.8,578.4 1605.7,605.2 1606.6,594.0 1607.5,595.4 1608.4,610.3 1609.2,585.2 1610.1,589.8 1611.0,585.6 1611.9,599.6 1612.8,598.2 1613.7,576.0 1614.6,585.9 1615.4,590.7 1616.3,591.0 1617.2,584.5 1618.1,608.1 1619.0,584.5 1619.9,586.2 1620.7,590.5 1621.6,595.6 1622.5,591.0 1623.4,588.4 1624.3,605.1 1625.2,601.6 1626.0,587.7 1626.9,598.8 1627.8,595.5 1628.7,597.8 1629.6,595.1 1630.5,584.4 1631.3,588.3 1632.2,596.6 1633.1,605.0 1634.0,581.7 1634.9,596.8 1635.8,593.4 1636.6,596.6 1637.5,593.1 1638.4,608.2 1639.3,612.8 1640.2,594.2 1641.1,590.3 1642.0,604.9 1642.8,596.9 1643.7,601.0 1644.6,611.9 1645.5,600.9 1646.4,594.0 1647.3,606.8 1648.1,603.6 1649.0,603.7 1649.9,599.9 1650.8,609.1 1651.7,588.2 1652.6,598.7 1653.4,592.7 1654.3,584.1 1655.2,601.7 1656.1,596.1 1657.0,588.0 1657.9,599.5 1658.7,594.5 1659.6,592.4 1660.5,597.7 1661.4,578.5 1662.3,596.5 1663.2,599.5 1664.0,599.8 1664.9,604.8 1665.8,610.5 1666.7,593.1 1667.6,600.4 1668.5,592.3 1669.4,586.1 1670.2,605.7 1671.1,593.4 1672.0,612.1 1672.9,587.4 1673.8,604.6 1674.7,601.7 1675.5,608.7 1676.4,607.7 1677.3,616.2 1678.2,614.8 1679.1,609.0 1680.0,599.5 1680.8,595.8 1681.7,616.2 1682.6,606.8 1683.5,610.6 1684.4,605.4 1685.3,595.4 1686.1,605.7 1687.0,593.3 1687.9,594.2 1688.8,616.2 1689.7,589.7 1690.6,591.0 1691.5,601.8 1692.3,609.8 1693.2,615.8 1694.1,594.3 1695.0,601.3 1695.9,610.2 1696.8,603.1 1697.6,593.1 1698.5,596.4 1699.4,616.2 1700.3,584.0 1701.2,600.7 1702.1,593.2 1702.9,603.4 1703.8,604.5 1704.7,598.5 1705.6,597.6 1706.5,592.0 1707.4,612.0 1708.2,595.2 1709.1,595.6 1710.0,601.5 1710.9,602.5 1711.8,595.2 1712.7,598.2 1713.5,599.3 1714.4,606.5 1715.3,600.6 1716.2,605.6 1717.1,609.1 1718.0,610.2 1718.9,604.5 1719.7,605.4 1720.6,607.8 1721.5,600.5 1722.4,605.3 1723.3,595.6 1724.2,597.9 1725.0,605.3 1725.9,613.9 1726.8,593.9 1727.7,590.2 1728.6,595.9 1729.5,593.3 1730.3,609.1 1731.2,594.5 1732.1,606.5 1733.0,597.4 1733.9,616.2 1734.8,610.9 1735.6,601.3 1736.5,589.2 1737.4,604.7 1738.3,608.9 1739.2,600.5 1740.1,604.4 1740.9,616.2 1741.8,608.2 1742.7,598.9 1743.6,600.6 1744.5,598.0 1745.4,591.6 1746.3,608.9 1747.1,605.6 1748.0,605.5 1748.9,592.9 1749.8,604.0 1750.7,601.0 1751.6,598.0 1752.4,606.3 1753.3,599.2 1754.2,599.9 1755.1,596.9 1756.0,595.2 1756.9,592.5 1757.7,604.3 1758.6,589.8 1759.5,602.5 1760.4,585.5 1761.3,602.3 1762.2,589.4 1763.0,592.8 1763.9,586.4 1764.8,595.1 1765.7,590.9 1766.6,607.4 1767.5,592.1 1768.4,603.3 1769.2,598.2 1770.1,609.5 1771.0,603.6 1771.9,597.4 1772.8,594.5 1773.7,593.7 1774.5,604.5 1775.4,607.8 1776.3,602.7 1777.2,606.3 1778.1,599.7 1779.0,591.8 1779.8,588.8 1780.7,607.4 1781.6,616.2 1782.5,614.9 1783.4,598.5 1784.3,616.2 1785.1,598.9 1786.0,594.8 1786.9,592.0 1787.8,596.7 1788.7,606.1 1789.6,613.2 1790.4,603.8 1791.3,596.3 1792.2,593.9 1793.1,585.3 1794.0,595.3 1794.9,590.7 1795.8,598.4 1796.6,605.0 1797.5,596.6 1798.4,611.6 1799.3,595.7 1800.2,588.3 1801.1,603.7 1801.9,614.4 1802.8,593.9 1803.7,603.7 1804.6,595.0 1805.5,609.7 1806.4,596.4 1807.2,597.1 1808.1,585.3 1809.0,601.2 1809.9,597.5 1810.8,605.5 1811.7,616.2 1812.5,581.3 1813.4,613.8 1814.3,580.5 1815.2,595.5 1816.1,588.4 1817.0,612.8 1817.8,590.8 1818.7,602.7 1819.6,597.9 1820.5,587.1 1821.4,604.5 1822.3,601.4 1823.2,615.0 1824.0,610.9 1824.9,612.6 1825.8,606.1 1826.7,592.4 1827.6,598.8 1828.5,593.4 1829.3,603.4 1830.2,596.4 1831.1,598.4 1832.0,608.8 1832.9,606.2 1833.8,602.8 1834.6,609.0 1835.5,597.0 1836.4,608.3 1837.3,605.4 1838.2,610.0 1839.1,603.0 1839.9,598.0 1840.8,603.1 1841.7,602.6 1842.6,608.9 1843.5,598.9 1844.4,602.1 1845.3,594.4 1846.1,616.2 1847.0,599.0 1847.9,598.5 1848.8,607.2 1849.7,610.1 1850.6,607.2 1851.4,602.8 1852.3,612.3 1853.2,596.9 1854.1,599.6 1855.0,600.0 1855.9,608.0 1856.7,604.5 1857.6,603.4 1858.5,608.3 1859.4,606.0 1860.3,601.5 1861.2,602.7 1862.0,602.5 1862.9,593.5 1863.8,603.4 1864.7,605.6 1865.6,611.0 1866.5,604.0 1867.3,613.6 1868.2,611.5 1869.1,598.1 1870.0,600.2" fill="none" stroke="#f4f4f4" stroke-width="1.2" stroke-linejoin="round"/>
<path d="M1301.8 439.2H1870.0M1301.8 617.2H1870.0M1869.6 439.2V617.2" stroke="#a2a2a2" stroke-width="1.6" fill="none"/>
<path d="M1302.2 438.4V618.0" stroke="#c83232" stroke-width="1.5"/>
<circle cx="1320.7" cy="543.6" r="5" fill="#1e9fdc"/>
<circle cx="1362.8" cy="519.8" r="5" fill="#e81010"/>
<circle cx="1443.0" cy="503.4" r="5" fill="#ffee10"/>
<circle cx="1567.5" cy="556.4" r="5" fill="#7a2fe4"/>
<text x="1292.5" y="445.1" text-anchor="end" style="font-family:&quot;Liberation Sans&quot;,sans-serif;fill:#fff;font-size:16.5px">-10.0</text>
<text x="1292.5" y="481.4" text-anchor="end" style="font-family:&quot;Liberation Sans&quot;,sans-serif;fill:#fff;font-size:16.5px">-20.0</text>
<text x="1292.5" y="517.3" text-anchor="end" style="font-family:&quot;Liberation Sans&quot;,sans-serif;fill:#fff;font-size:16.5px">-30.0</text>
<text x="1292.5" y="553.4" text-anchor="end" style="font-family:&quot;Liberation Sans&quot;,sans-serif;fill:#fff;font-size:16.5px">-40.0</text>
<text x="1292.5" y="588.2" text-anchor="end" style="font-family:&quot;Liberation Sans&quot;,sans-serif;fill:#fff;font-size:16.5px">-50.0</text>
<text x="1292.5" y="624.3" text-anchor="end" style="font-family:&quot;Liberation Sans&quot;,sans-serif;fill:#fff;font-size:16.5px">-60.0</text>
<text x="1327.0" y="634" text-anchor="middle" style="font-family:&quot;Liberation Sans&quot;,sans-serif;fill:#fff;font-size:11.8px">-60</text>
<text x="1365.1" y="634" text-anchor="middle" style="font-family:&quot;Liberation Sans&quot;,sans-serif;fill:#fff;font-size:11.8px">-40</text>
<text x="1403.2" y="634" text-anchor="middle" style="font-family:&quot;Liberation Sans&quot;,sans-serif;fill:#fff;font-size:11.8px">-20</text>
<text x="1442.7" y="634" text-anchor="middle" style="font-family:&quot;Liberation Sans&quot;,sans-serif;fill:#fff;font-size:11.8px">0</text>
<text x="1480.8" y="634" text-anchor="middle" style="font-family:&quot;Liberation Sans&quot;,sans-serif;fill:#fff;font-size:11.8px">20</text>
<text x="1518.8" y="634" text-anchor="middle" style="font-family:&quot;Liberation Sans&quot;,sans-serif;fill:#fff;font-size:11.8px">40</text>
<text x="1556.9" y="634" text-anchor="middle" style="font-family:&quot;Liberation Sans&quot;,sans-serif;fill:#fff;font-size:11.8px">60</text>
<text x="1594.9" y="634" text-anchor="middle" style="font-family:&quot;Liberation Sans&quot;,sans-serif;fill:#fff;font-size:11.8px">80</text>
<text x="1633.0" y="634" text-anchor="middle" style="font-family:&quot;Liberation Sans&quot;,sans-serif;fill:#fff;font-size:11.8px">100</text>
<text x="1671.0" y="634" text-anchor="middle" style="font-family:&quot;Liberation Sans&quot;,sans-serif;fill:#fff;font-size:11.8px">120</text>
<text x="1709.1" y="634" text-anchor="middle" style="font-family:&quot;Liberation Sans&quot;,sans-serif;fill:#fff;font-size:11.8px">140</text>
<text x="1747.1" y="634" text-anchor="middle" style="font-family:&quot;Liberation Sans&quot;,sans-serif;fill:#fff;font-size:11.8px">160</text>
<text x="1785.2" y="634" text-anchor="middle" style="font-family:&quot;Liberation Sans&quot;,sans-serif;fill:#fff;font-size:11.8px">180</text>
<text x="1823.2" y="634" text-anchor="middle" style="font-family:&quot;Liberation Sans&quot;,sans-serif;fill:#fff;font-size:11.8px">200</text>
<text x="1861.2" y="634" text-anchor="middle" style="font-family:&quot;Liberation Sans&quot;,sans-serif;fill:#fff;font-size:11.8px">220</text>
<text x="1585.5" y="657" text-anchor="middle" style="font-family:&quot;Liberation Sans&quot;,sans-serif;fill:#fff;font-size:17px">Distance Difference (km)</text>
<text transform="translate(1227.5 529) rotate(-90)" text-anchor="middle" style="font-family:&quot;Liberation Sans&quot;,sans-serif;fill:#fff;font-size:15.7px;font-weight:bold">Magnitude (dB)</text>
</svg>
<svg style="left:990px;top:704px" width="881" height="267" viewBox="990 704 881 267" >
<rect x="1094.2" y="903.2" width="769.4" height="8.5" fill="#4a4a4a"/>
<path d="M1094.2 761.2H1863.6 M1094.2 799.3H1863.6 M1094.2 837.3H1863.6 M1094.2 874.6H1863.6 M1141.5 723.1V911.7 M1216.4 723.1V911.7 M1291.4 723.1V911.7 M1366.3 723.1V911.7 M1441.3 723.1V911.7 M1516.2 723.1V911.7 M1591.1 723.1V911.7 M1666.1 723.1V911.7 M1741.0 723.1V911.7 M1816.0 723.1V911.7" stroke="#8e8e8e" stroke-width="1.1" fill="none"/>
<path d="M1095.2 909.5H1190.0M1767.5 909.5H1862.6" stroke="#cfcfcf" stroke-width="1.4"/>
<path d="M1190.5 724.1V911.7" stroke="#e6e01e" stroke-width="2" stroke-dasharray="2 1.75"/>
<path d="M1334.6 724.1V911.7" stroke="#e6e01e" stroke-width="2" stroke-dasharray="2 1.75"/>
<path d="M1478.6 724.1V911.7" stroke="#e6e01e" stroke-width="2" stroke-dasharray="2 1.75"/>
<path d="M1623.4 724.1V911.7" stroke="#e6e01e" stroke-width="2" stroke-dasharray="2 1.75"/>
<path d="M1767.3 724.1V911.7" stroke="#e6e01e" stroke-width="2" stroke-dasharray="2 1.75"/>
<path d="M1209.10 911.7L1209.65 887.2L1210.10 885.7H1210.70L1211.15 887.2L1211.70 911.7Z M1245.20 911.7L1245.75 830.4L1246.20 828.9H1246.80L1247.25 830.4L1247.80 911.7Z M1246.70 911.7L1247.25 887.2L1247.70 885.7H1248.30L1248.75 887.2L1249.30 911.7Z M1281.20 911.7L1281.75 814.9L1282.20 813.4H1282.80L1283.25 814.9L1283.80 911.7Z M1298.80 911.7L1299.35 783.7L1299.80 782.2H1300.40L1300.85 783.7L1301.40 911.7Z M1352.70 911.7L1353.25 765.9L1353.70 764.4H1354.30L1354.75 765.9L1355.30 911.7Z M1388.70 911.7L1389.25 828.5L1389.70 827.0H1390.30L1390.75 828.5L1391.30 911.7Z M1425.30 911.7L1425.85 852.2L1426.30 850.7H1426.90L1427.35 852.2L1427.90 911.7Z M1443.10 911.7L1443.65 750.3L1444.10 748.8H1444.70L1445.15 750.3L1445.70 911.7Z M1497.20 911.7L1497.75 724.6L1498.20 723.1H1498.80L1499.25 724.6L1499.80 911.7Z M1533.70 911.7L1534.25 802.5L1534.70 801.0H1535.30L1535.75 802.5L1536.30 911.7Z M1569.30 911.7L1569.85 775.5L1570.30 774.0H1570.90L1571.35 775.5L1571.90 911.7Z M1587.80 911.7L1588.35 782.3L1588.80 780.8H1589.40L1589.85 782.3L1590.40 911.7Z M1641.70 911.7L1642.25 753.7L1642.70 752.2H1643.30L1643.75 753.7L1644.30 911.7Z M1677.50 911.7L1678.05 798.9L1678.50 797.4H1679.10L1679.55 798.9L1680.10 911.7Z M1713.30 911.7L1713.85 752.8L1714.30 751.3H1714.90L1715.35 752.8L1715.90 911.7Z M1731.30 911.7L1731.85 743.6L1732.30 742.1H1732.90L1733.35 743.6L1733.90 911.7Z" fill="#8fd08f"/>
<path d="M1212.10 911.7L1212.65 803.6L1213.10 802.1H1213.70L1214.15 803.6L1214.70 911.7Z M1203.00 911.7L1203.25 909.5L1203.40 908.0H1204.00L1204.15 909.5L1204.40 911.7Z M1228.90 911.7L1229.15 905.8L1229.30 904.3H1229.90L1230.05 905.8L1230.30 911.7Z M1247.90 911.7L1248.45 726.5L1248.90 725.0H1249.50L1249.95 726.5L1250.50 911.7Z M1268.40 911.7L1268.95 892.8L1269.40 891.3H1270.00L1270.45 892.8L1271.00 911.7Z M1284.20 911.7L1284.75 785.8L1285.20 784.3H1285.80L1286.25 785.8L1286.80 911.7Z M1301.80 911.7L1302.35 771.1L1302.80 769.6H1303.40L1303.85 771.1L1304.40 911.7Z M1356.30 911.7L1356.85 739.6L1357.30 738.1H1357.90L1358.35 739.6L1358.90 911.7Z M1391.70 911.7L1392.25 787.1L1392.70 785.6H1393.30L1393.75 787.1L1394.30 911.7Z M1428.20 911.7L1428.75 783.1L1429.20 781.6H1429.80L1430.25 783.1L1430.80 911.7Z M1446.20 911.7L1446.75 755.1L1447.20 753.6H1447.80L1448.25 755.1L1448.80 911.7Z M1500.60 911.7L1501.15 777.9L1501.60 776.4H1502.20L1502.65 777.9L1503.20 911.7Z M1536.40 911.7L1536.95 816.6L1537.40 815.1H1538.00L1538.45 816.6L1539.00 911.7Z M1555.30 911.7L1555.55 901.1L1555.70 899.6H1556.30L1556.45 901.1L1556.70 911.7Z M1561.30 911.7L1561.55 910.4L1561.70 908.9H1562.30L1562.45 910.4L1562.70 911.7Z M1572.50 911.7L1573.05 810.3L1573.50 808.8H1574.10L1574.55 810.3L1575.10 911.7Z M1579.60 911.7L1579.85 909.5L1580.00 908.0H1580.60L1580.75 909.5L1581.00 911.7Z M1590.50 911.7L1591.05 831.2L1591.50 829.7H1592.10L1592.55 831.2L1593.10 911.7Z M1644.80 911.7L1645.35 806.5L1645.80 805.0H1646.40L1646.85 806.5L1647.40 911.7Z M1643.70 911.7L1644.25 889.1L1644.70 887.6H1645.30L1645.75 889.1L1646.30 911.7Z M1655.30 911.7L1655.55 909.5L1655.70 908.0H1656.30L1656.45 909.5L1656.70 911.7Z M1680.40 911.7L1680.95 760.8L1681.40 759.3H1682.00L1682.45 760.8L1683.00 911.7Z M1702.90 911.7L1703.15 907.6L1703.30 906.1H1703.90L1704.05 907.6L1704.30 911.7Z M1716.70 911.7L1717.25 798.3L1717.70 796.8H1718.30L1718.75 798.3L1719.30 911.7Z M1734.70 911.7L1735.25 794.5L1735.70 793.0H1736.30L1736.75 794.5L1737.30 911.7Z M1733.20 911.7L1733.75 864.9L1734.20 863.4H1734.80L1735.25 864.9L1735.80 911.7Z M1737.80 911.7L1738.05 906.7L1738.20 905.2H1738.80L1738.95 906.7L1739.20 911.7Z M1754.70 911.7L1754.95 908.6L1755.10 907.1H1755.70L1755.85 908.6L1756.10 911.7Z" fill="#f2f2f2"/>
<path d="M1094.2 723.1H1863.6V911.7H1094.2" stroke="#a2a2a2" stroke-width="1.6" fill="none"/>
<path d="M1094.4 722.3000000000001V912.5" stroke="#c83232" stroke-width="1.6"/>
<text x="1082" y="728.9" text-anchor="end" style="font-family:&quot;Liberation Sans&quot;,sans-serif;fill:#fff;font-size:16px">1.0</text>
<text x="1082" y="767.0" text-anchor="end" style="font-family:&quot;Liberation Sans&quot;,sans-serif;fill:#fff;font-size:16px">0.8</text>
<text x="1082" y="805.1" text-anchor="end" style="font-family:&quot;Liberation Sans&quot;,sans-serif;fill:#fff;font-size:16px">0.6</text>
<text x="1082" y="843.1" text-anchor="end" style="font-family:&quot;Liberation Sans&quot;,sans-serif;fill:#fff;font-size:16px">0.4</text>
<text x="1082" y="880.4" text-anchor="end" style="font-family:&quot;Liberation Sans&quot;,sans-serif;fill:#fff;font-size:16px">0.2</text>
<text x="1082" y="917.5" text-anchor="end" style="font-family:&quot;Liberation Sans&quot;,sans-serif;fill:#fff;font-size:16px">0.0</text>
<text x="1139.5" y="930.8" text-anchor="middle" style="font-family:&quot;Liberation Sans&quot;,sans-serif;fill:#fff;font-size:17px">-900</text>
<text x="1214.4" y="930.8" text-anchor="middle" style="font-family:&quot;Liberation Sans&quot;,sans-serif;fill:#fff;font-size:17px">-700</text>
<text x="1289.4" y="930.8" text-anchor="middle" style="font-family:&quot;Liberation Sans&quot;,sans-serif;fill:#fff;font-size:17px">-500</text>
<text x="1364.3" y="930.8" text-anchor="middle" style="font-family:&quot;Liberation Sans&quot;,sans-serif;fill:#fff;font-size:17px">-300</text>
<text x="1439.3" y="930.8" text-anchor="middle" style="font-family:&quot;Liberation Sans&quot;,sans-serif;fill:#fff;font-size:17px">-100</text>
<text x="1516.2" y="930.8" text-anchor="middle" style="font-family:&quot;Liberation Sans&quot;,sans-serif;fill:#fff;font-size:17px">100</text>
<text x="1591.1" y="930.8" text-anchor="middle" style="font-family:&quot;Liberation Sans&quot;,sans-serif;fill:#fff;font-size:17px">300</text>
<text x="1666.1" y="930.8" text-anchor="middle" style="font-family:&quot;Liberation Sans&quot;,sans-serif;fill:#fff;font-size:17px">500</text>
<text x="1741.0" y="930.8" text-anchor="middle" style="font-family:&quot;Liberation Sans&quot;,sans-serif;fill:#fff;font-size:17px">700</text>
<text x="1816.0" y="930.8" text-anchor="middle" style="font-family:&quot;Liberation Sans&quot;,sans-serif;fill:#fff;font-size:17px">900</text>
<text x="1478.5" y="954.7" text-anchor="middle" style="font-family:&quot;Liberation Sans&quot;,sans-serif;fill:#fff;font-size:16.8px">TII Subcarrier</text>
<text transform="translate(1030.5 817.5) rotate(-90)" text-anchor="middle" style="font-family:&quot;Liberation Sans&quot;,sans-serif;fill:#fff;font-size:15px;font-weight:bold">Magnitude</text>
</svg>
</div></body></html>
